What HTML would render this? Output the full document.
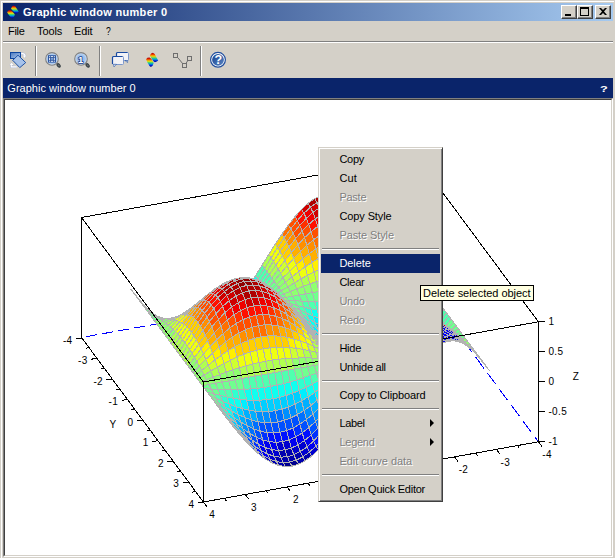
<!DOCTYPE html>
<html><head><meta charset="utf-8"><title>Graphic window number 0</title>
<style>
html,body{margin:0;padding:0;}
body{width:615px;height:558px;overflow:hidden;background:#d4d0c8;font-family:"Liberation Sans",sans-serif;font-size:11px;color:#000;position:relative;}
.abs{position:absolute;}
#title{left:3px;top:3px;width:610px;height:18px;background:linear-gradient(to right,#0a246a 0%,#a6caf0 100%);}
#title .t{position:absolute;left:20px;top:2px;color:#fff;font-weight:bold;font-size:11px;line-height:14px;white-space:nowrap;letter-spacing:0.3px;}
.wb{position:absolute;top:2px;width:16px;height:14px;background:#d4d0c8;box-sizing:border-box;border:1px solid;border-color:#fff #404040 #404040 #fff;box-shadow:inset -1px -1px 0 #808080;}
#menubar span{position:absolute;top:25px;line-height:13px;font-size:11px;}
#canvas{left:5px;top:100px;width:606px;height:455px;background:#fff;}
#bluebar{left:3px;top:78px;width:610px;height:20px;background:#0a246a;color:#fff;}
#ctx{left:318px;top:147px;width:125px;height:355px;background:#d4d0c8;box-sizing:border-box;border:1px solid;border-color:#d4d0c8 #404040 #404040 #d4d0c8;box-shadow:inset 1px 1px 0 #fff, inset -1px -1px 0 #808080;}
#ctx .i{position:absolute;left:2px;width:119px;height:19px;line-height:19px;white-space:nowrap;}
#ctx .i span{position:absolute;left:18.4px;top:0;letter-spacing:-0.25px;}
#ctx .d{color:#808080;text-shadow:1px 1px 0 #fff;}
#ctx .h{background:#0a246a;color:#fff;}
#ctx .s{position:absolute;left:3px;width:117px;height:1px;background:#808080;border-bottom:1px solid #fff;}
#ctx .a{position:absolute;left:111px;width:0;height:0;border-left:4px solid #000;border-top:4px solid transparent;border-bottom:4px solid transparent;}
#tip{left:420px;top:285px;width:114px;height:16px;box-sizing:border-box;border:1px solid #000;background:#ffffe1;font-size:11px;line-height:14px;white-space:nowrap;}
#tip span{position:absolute;left:2px;top:0;letter-spacing:-0.03px;}
svg text{font-family:"Liberation Sans",sans-serif;}
</style></head><body>
<!-- window frame -->
<div class="abs" style="left:1px;top:1px;width:613px;height:1px;background:#fff"></div>
<div class="abs" style="left:1px;top:1px;width:1px;height:557px;background:#fff"></div>
<div class="abs" id="title"><span class="t">Graphic window number 0</span>
<div class="wb" style="left:558px"></div><div class="wb" style="left:574px"></div><div class="wb" style="left:592px"></div>
<svg class="abs" style="left:558px;top:2px" width="52" height="14" viewBox="561 5 52 14" shape-rendering="crispEdges"><rect x="565" y="14" width="6" height="2" fill="#000"/><path d="M580 7h9v9h-9zM581 9v6h7v-6z" fill="#000" fill-rule="evenodd"/><path d="M599 8h2l2 2l2-2h2l-3 3.500l3 3.500h-2l-2-2l-2 2h-2l3-3.500z" fill="#000" shape-rendering="auto"/></svg>
</div>
<div class="abs" id="menubar"><span style="left:8px;letter-spacing:-0.300px">File</span><span style="left:37px;letter-spacing:-0.100px">Tools</span><span style="left:74px;letter-spacing:-0.150px">Edit</span><span style="left:106px;transform:scale(0.78,1);transform-origin:0 0">?</span></div>
<div class="abs" style="left:3px;top:41px;width:610px;height:1px;background:#808080"></div>
<div class="abs" style="left:3px;top:42px;width:610px;height:1px;background:#fff"></div>
<!-- toolbar icons -->
<svg class="abs" style="left:0;top:43px" width="615" height="35" viewBox="0 43 615 35">
<defs>
<linearGradient id="rb" x1="0" y1="0" x2="0" y2="1"><stop offset="0" stop-color="#a00000"/><stop offset="0.14" stop-color="#e01800"/><stop offset="0.30" stop-color="#f8a000"/><stop offset="0.43" stop-color="#c8e020"/><stop offset="0.56" stop-color="#30d080"/><stop offset="0.70" stop-color="#0098e0"/><stop offset="0.86" stop-color="#0018d0"/><stop offset="1" stop-color="#000080"/></linearGradient>
<linearGradient id="bl" x1="0" y1="0" x2="1" y2="1"><stop offset="0" stop-color="#4878c0"/><stop offset="1" stop-color="#b0c8ec"/></linearGradient>
<radialGradient id="lens" cx="0.5" cy="0.5" r="0.5"><stop offset="0" stop-color="#7ea8e0"/><stop offset="0.700" stop-color="#a8c8f0"/><stop offset="1" stop-color="#d8e6f6"/></radialGradient>
<linearGradient id="hp" x1="0" y1="0" x2="1" y2="1"><stop offset="0" stop-color="#17428f"/><stop offset="1" stop-color="#5884c2"/></linearGradient>
</defs>
<g fill="none">
<!-- separators -->
<path d="M35.5 46V76M99.5 46V76M200.500 46V76" stroke="#808080"/><path d="M36.5 46V76M100.5 46V76M201.5 46V76" stroke="#fff"/>
<!-- rotate icon -->
<path d="M21.200 53.600h1.400c1.600 0 2.200 0.800 2.200 2.200" stroke="#b4bed6" stroke-width="2.400"/><path d="M22.400 55.300h4.200l-2.100 3z" fill="#b4bed6"/>
<path d="M21.200 53.600h1.400c1.600 0 2.200 0.800 2.200 2.200" stroke="#fff" stroke-width="1.200"/><path d="M22.900 55.600h3.200l-1.600 2.300z" fill="#fff"/>
<path d="M16.800 66.900h-5.400v-1.600" stroke="#b4bed6" stroke-width="2.400"/><path d="M9.300 65.300l2.300-3 2.300 3z" fill="#b4bed6"/>
<path d="M16.800 66.900h-5.400v-1.600" stroke="#fff" stroke-width="1.200"/><path d="M9.800 65l1.800-2.300 1.800 2.300z" fill="#fff"/>
<rect x="10.5" y="52.5" width="10" height="6" fill="url(#bl)" stroke="#0f469e"/>
<path d="M18 55.2L25.7 62.6L19.8 67.6L12.7 60.3Z" fill="#a6c2ea" stroke="#0f469e" stroke-width="0.9"/>
<!-- zoom icon -->
<path d="M55.800 62.800l2 2" stroke="#50585c" stroke-width="1.400"/><ellipse cx="58.700" cy="65.400" rx="2.500" ry="1.800" transform="rotate(45 58.700 65.400)" fill="#3c4448"/><ellipse cx="58.700" cy="65.400" rx="1.100" ry="0.600" transform="rotate(45 58.700 65.400)" fill="#70787c"/>
<circle cx="52" cy="58.9" r="6.300" fill="url(#lens)" stroke="#808080" stroke-width="1.100"/>
<rect x="48" y="55.2" width="8" height="7.4" fill="#2f579f"/>
<path d="M49.2 56.600h5.600M49.200 61.300h5.600" stroke="#fff" stroke-width="0.9" stroke-dasharray="0.9,0.8,2.2,0.8"/>
<path d="M49.600 57.800v2.400M54.300 57.800v2.400" stroke="#fff" stroke-width="0.9"/><rect x="51.200" y="58" width="1.600" height="1.800" fill="#8db2e4"/>
<!-- zoom 1 icon -->
<path d="M84.800 62.800l2 2" stroke="#50585c" stroke-width="1.400"/><ellipse cx="87.700" cy="65.400" rx="2.500" ry="1.800" transform="rotate(45 87.700 65.400)" fill="#3c4448"/><ellipse cx="87.700" cy="65.400" rx="1.100" ry="0.600" transform="rotate(45 87.700 65.400)" fill="#70787c"/>
<circle cx="81" cy="58.9" r="6.300" fill="url(#lens)" stroke="#808080" stroke-width="1.100"/>
<text x="80.600" y="62.600" text-anchor="middle" font-size="9.500" font-weight="bold" fill="#fff" stroke="#1a3c86" stroke-width="1.500" paint-order="stroke" stroke-linejoin="round">1</text>
<!-- bubbles -->
<rect x="116.5" y="52.5" width="12" height="8" rx="1" fill="#f2f2f6" stroke="#7c98cc"/><path d="M116.5 60V53.5a1 1 0 0 1 1-1H127.500" stroke="#1a4aa0" stroke-width="1.2"/><path d="M125 60.5h2.600v2z" fill="#fff" stroke="#1a4aa0" stroke-width="0.6"/>
<rect x="112.5" y="56.500" width="11" height="8" rx="1" fill="#f2f2f6" stroke="#7c98cc"/><path d="M112.500 64V57.500a1 1 0 0 1 1-1H122.500" stroke="#1a4aa0" stroke-width="1.2"/><path d="M113.600 64.300h2.800l-2.400 2.600z" fill="#fff" stroke="#1a4aa0" stroke-width="0.6"/>
<!-- surface icon -->
<polygon points="149.9,55.5 151.1,53.5 152.9,52.7 154.7,54.0 156.4,57.2 158.2,60.4 156.8,61.5 154.9,62.3 153.4,61.2 151.4,58.3" fill="url(#rb)"/>
<polygon points="146.1,59.2 147.4,57.8 149.5,57.5 151.5,59.0 153.700,62.900 152.600,65.800 150.900,66.900 149.500,66 147.200,61.900" fill="url(#rb)"/>
<!-- nodes icon -->
<path d="M178 57.800L182.300 63.200M186 63.300L187.800 60.600" stroke="#6e6e6e" stroke-width="1"/>
<rect x="173.500" y="53.500" width="4" height="4" stroke="#6e6e6e"/><rect x="182.500" y="63.500" width="4" height="4" stroke="#6e6e6e"/><rect x="187.500" y="56.500" width="4" height="4" stroke="#6e6e6e"/>
<!-- help icon -->
<circle cx="218" cy="59.800" r="7.400" fill="#fff" stroke="#1f4e9e" stroke-width="1.200"/><circle cx="218" cy="59.800" r="5.900" fill="url(#hp)"/>
</g>
<text x="218.200" y="64.300" text-anchor="middle" font-size="12.500" font-weight="bold" fill="#fff">?</text>
</svg>
<!-- title icon -->
<svg class="abs" style="left:3px;top:3px" width="20" height="18" viewBox="3 3 20 18">
<polygon points="11.0,8.7 12.0,6.6 13.7,5.4 15.400,6.400 17.300,9.400 18.700,11.400 17.300,13 15.500,13.600 14.500,12.500 12.500,10.400" fill="url(#rb)"/>
<polygon points="7.1,12.2 8.3,10.500 10.0,9.9 11.700,10.800 14.900,14.400 14,16.700 12.200,18.400 10.900,17.500 8.500,14.500" fill="url(#rb)"/>
</svg>
<div class="abs" id="bluebar"><span class="abs" style="left:4.300px;top:3px;line-height:14px;font-size:11px;white-space:nowrap;letter-spacing:0.030px">Graphic window number 0</span><span class="abs" style="left:596.500px;top:3px;line-height:14px;font-weight:bold;transform:scale(1.16,0.86);transform-origin:0 11px">?</span></div>
<div class="abs" style="left:3px;top:98px;width:610px;height:459px;box-sizing:border-box;border:1px solid;border-color:#808080 #fff #fff #808080"></div>
<div class="abs" style="left:4px;top:99px;width:608px;height:457px;box-sizing:border-box;border:1px solid;border-color:#404040 #d4d0c8 #d4d0c8 #404040"></div>
<div class="abs" id="canvas"></div>
<svg class="abs" style="left:0;top:0" width="615" height="558" viewBox="0 0 615 558">
<g stroke="#0000ff" stroke-width="1" shape-rendering="crispEdges"><line x1="416.5" y1="277.3" x2="81.5" y2="337.5" stroke-dasharray="11.18,5.08" stroke-dashoffset="1"/><line x1="416.5" y1="277.3" x2="538.4" y2="441.8" stroke-dasharray="13.69,6.22"/><line x1="416.5" y1="277.3" x2="416.5" y2="157.3" stroke-dasharray="11.00,5.00"/></g>
<g stroke="#000" stroke-width="1" shape-rendering="crispEdges"><line x1="81.5" y1="217.5" x2="416.5" y2="157.3" /><line x1="416.5" y1="157.3" x2="538.4" y2="321.8" /><line x1="81.5" y1="217.5" x2="81.5" y2="337.5" /></g>
<g stroke="#b2b2b2" stroke-width="1" shape-rendering="crispEdges"><polygon fill="#af0000" points="321.3,195.2 314.7,198.5 317.1,202.5 323.7,199.1"/><polygon fill="#af0000" points="314.7,198.5 308.1,203.3 310.5,207.2 317.1,202.5"/><polygon fill="#cf0000" points="308.1,203.3 301.5,209.4 303.9,213.2 310.5,207.2"/><polygon fill="#ff1000" points="301.5,209.4 295.0,216.7 297.4,220.5 303.9,213.2"/><polygon fill="#ff5000" points="295.0,216.7 288.4,225.1 290.8,228.7 297.4,220.5"/><polygon fill="#00cfff" points="248.9,286.0 242.3,295.8 244.7,298.7 251.3,289.0"/><polygon fill="#10ffef" points="255.5,275.6 248.9,286.0 251.3,289.0 257.9,278.7"/><polygon fill="#50ffaf" points="262.1,265.1 255.5,275.6 257.9,278.7 264.5,268.3"/><polygon fill="#0070ff" points="242.3,295.8 235.8,305.0 238.2,307.8 244.7,298.7"/><polygon fill="#ff7000" points="288.4,225.1 281.8,234.3 284.2,237.8 290.8,228.7"/><polygon fill="#afff50" points="268.7,254.5 262.1,265.1 264.5,268.3 271.1,257.8"/><polygon fill="#efff10" points="275.2,244.1 268.7,254.5 271.1,257.8 277.6,247.6"/><polygon fill="#ffcf00" points="281.8,234.3 275.2,244.1 277.6,247.6 284.2,237.8"/><polygon fill="#0050ff" points="235.8,305.0 229.2,313.4 231.6,316.1 238.2,307.8"/><polygon fill="#0010ff" points="229.2,313.4 222.6,320.7 225.0,323.3 231.6,316.1"/><polygon fill="#af0000" points="323.7,199.1 317.1,202.5 319.5,207.8 326.1,204.5"/><polygon fill="#0000cf" points="222.6,320.7 216.0,326.8 218.4,329.4 225.0,323.3"/><polygon fill="#0000af" points="216.0,326.8 209.5,331.6 211.9,334.1 218.4,329.4"/><polygon fill="#cf0000" points="317.1,202.5 310.5,207.2 312.9,212.4 319.5,207.8"/><polygon fill="#ef0000" points="310.5,207.2 303.9,213.2 306.3,218.3 312.9,212.4"/><polygon fill="#0000af" points="209.5,331.6 202.9,335.0 205.3,337.5 211.9,334.1"/><polygon fill="#ff1000" points="303.9,213.2 297.4,220.5 299.8,225.3 306.3,218.3"/><polygon fill="#ff5000" points="297.4,220.5 290.8,228.7 293.2,233.2 299.8,225.3"/><polygon fill="#ff8f00" points="290.8,228.7 284.2,237.8 286.6,242.1 293.2,233.2"/><polygon fill="#10ffef" points="257.9,278.7 251.3,289.0 253.7,291.5 260.3,281.6"/><polygon fill="#50ffaf" points="264.5,268.3 257.9,278.7 260.3,281.6 266.9,271.5"/><polygon fill="#00cfff" points="251.3,289.0 244.7,298.7 247.1,301.0 253.7,291.5"/><polygon fill="#ffcf00" points="284.2,237.8 277.6,247.6 280.0,251.5 286.6,242.1"/><polygon fill="#afff50" points="271.1,257.8 264.5,268.3 266.9,271.5 273.4,261.4"/><polygon fill="#efff10" points="277.6,247.6 271.1,257.8 273.4,261.4 280.0,251.5"/><polygon fill="#00008f" points="202.9,335.0 196.3,336.9 198.7,339.4 205.3,337.5"/><polygon fill="#008fff" points="244.7,298.7 238.2,307.8 240.6,309.8 247.1,301.0"/><polygon fill="#0050ff" points="238.2,307.8 231.6,316.1 234.0,317.8 240.6,309.8"/><polygon fill="#cf0000" points="326.1,204.5 319.5,207.8 321.9,214.4 328.5,211.3"/><polygon fill="#0010ff" points="231.6,316.1 225.0,323.3 227.4,324.8 234.0,317.8"/><polygon fill="#0000ef" points="225.0,323.3 218.4,329.4 220.8,330.6 227.4,324.8"/><polygon fill="#cf0000" points="319.5,207.8 312.9,212.4 315.3,218.8 321.9,214.4"/><polygon fill="#00008f" points="196.3,336.9 189.7,337.3 192.1,339.8 198.7,339.4"/><polygon fill="#0000cf" points="218.4,329.4 211.9,334.1 214.2,335.2 220.8,330.6"/><polygon fill="#ef0000" points="312.9,212.4 306.3,218.3 308.7,224.4 315.3,218.8"/><polygon fill="#ff3000" points="306.3,218.3 299.8,225.3 302.1,231.0 308.7,224.4"/><polygon fill="#0000af" points="211.9,334.1 205.3,337.5 207.7,338.5 214.2,335.2"/><polygon fill="#0000af" points="189.7,337.3 183.1,336.3 185.5,338.8 192.1,339.8"/><polygon fill="#ff5000" points="299.8,225.3 293.2,233.2 295.6,238.6 302.1,231.0"/><polygon fill="#ff8f00" points="293.2,233.2 286.6,242.1 289.0,246.9 295.6,238.6"/><polygon fill="#ffcf00" points="286.6,242.1 280.0,251.5 282.4,255.9 289.0,246.9"/><polygon fill="#efff10" points="280.0,251.5 273.4,261.4 275.8,265.2 282.4,255.9"/><polygon fill="#afff50" points="273.4,261.4 266.9,271.5 269.3,274.7 275.8,265.2"/><polygon fill="#50ffaf" points="266.9,271.5 260.3,281.6 262.7,284.3 269.3,274.7"/><polygon fill="#10ffef" points="260.3,281.6 253.7,291.5 256.1,293.6 262.7,284.3"/><polygon fill="#00cfff" points="253.7,291.5 247.1,301.0 249.5,302.6 256.1,293.6"/><polygon fill="#0000af" points="205.3,337.5 198.7,339.4 201.1,340.4 207.7,338.5"/><polygon fill="#008fff" points="247.1,301.0 240.6,309.8 242.9,310.9 249.5,302.6"/><polygon fill="#0050ff" points="240.6,309.8 234.0,317.8 236.4,318.5 242.9,310.9"/><polygon fill="#ef0000" points="321.9,214.4 315.3,218.8 317.7,226.4 324.3,222.3"/><polygon fill="#0030ff" points="234.0,317.8 227.4,324.8 229.8,325.1 236.4,318.5"/><polygon fill="#0000af" points="183.1,336.3 176.6,333.9 179.0,336.4 185.5,338.8"/><polygon fill="#ff1000" points="315.3,218.8 308.7,224.4 311.1,231.6 317.7,226.4"/><polygon fill="#0000ef" points="227.4,324.8 220.8,330.6 223.2,330.6 229.8,325.1"/><polygon fill="#0000af" points="198.7,339.4 192.1,339.8 194.5,340.9 201.1,340.4"/><polygon fill="#ff5000" points="308.7,224.4 302.1,231.0 304.5,237.7 311.1,231.6"/><polygon fill="#0000cf" points="220.8,330.6 214.2,335.2 216.6,335.0 223.2,330.6"/><polygon fill="#ff7000" points="302.1,231.0 295.6,238.6 298.0,244.7 304.5,237.7"/><polygon fill="#ffaf00" points="295.6,238.6 289.0,246.9 291.4,252.4 298.0,244.7"/><polygon fill="#0000cf" points="176.6,333.9 170.0,330.1 172.4,332.8 179.0,336.4"/><polygon fill="#0000af" points="192.1,339.8 185.5,338.8 187.9,340.0 194.5,340.9"/><polygon fill="#0000cf" points="214.2,335.2 207.7,338.5 210.1,338.2 216.6,335.0"/><polygon fill="#ffcf00" points="289.0,246.9 282.4,255.9 284.8,260.6 291.4,252.4"/><polygon fill="#efff10" points="282.4,255.9 275.8,265.2 278.2,269.2 284.8,260.6"/><polygon fill="#afff50" points="275.8,265.2 269.3,274.7 271.7,278.0 278.2,269.2"/><polygon fill="#ff3000" points="324.3,222.3 317.7,226.4 320.1,235.1 326.7,231.4"/><polygon fill="#50ffaf" points="269.3,274.7 262.7,284.3 265.1,286.7 271.7,278.0"/><polygon fill="#10ffef" points="262.7,284.3 256.1,293.6 258.5,295.3 265.1,286.7"/><polygon fill="#00cfff" points="256.1,293.6 249.5,302.6 251.9,303.6 258.5,295.3"/><polygon fill="#00afff" points="249.5,302.6 242.9,310.9 245.3,311.2 251.9,303.6"/><polygon fill="#0000af" points="207.7,338.5 201.1,340.4 203.5,340.0 210.1,338.2"/><polygon fill="#ff5000" points="317.7,226.4 311.1,231.6 313.5,239.8 320.1,235.1"/><polygon fill="#0070ff" points="242.9,310.9 236.4,318.5 238.8,318.2 245.3,311.2"/><polygon fill="#0000cf" points="185.5,338.8 179.0,336.4 181.4,337.7 187.9,340.0"/><polygon fill="#0050ff" points="236.4,318.5 229.8,325.1 232.2,324.3 238.8,318.2"/><polygon fill="#0010ff" points="170.0,330.1 163.4,325.2 165.8,327.9 172.4,332.8"/><polygon fill="#ff7000" points="311.1,231.6 304.5,237.7 306.9,245.3 313.5,239.8"/><polygon fill="#0000ef" points="201.1,340.4 194.5,340.9 196.9,340.5 203.5,340.0"/><polygon fill="#ff8f00" points="304.5,237.7 298.0,244.7 300.4,251.5 306.9,245.3"/><polygon fill="#0010ff" points="229.8,325.1 223.2,330.6 225.6,329.5 232.2,324.3"/><polygon fill="#ffaf00" points="298.0,244.7 291.4,252.4 293.8,258.4 300.4,251.5"/><polygon fill="#0000ef" points="223.2,330.6 216.6,335.0 219.0,333.6 225.6,329.5"/><polygon fill="#ffef00" points="291.4,252.4 284.8,260.6 287.2,265.7 293.8,258.4"/><polygon fill="#0000ef" points="179.0,336.4 172.4,332.8 174.8,334.2 181.4,337.7"/><polygon fill="#cfff30" points="284.8,260.6 278.2,269.2 280.6,273.4 287.2,265.7"/><polygon fill="#8fff70" points="278.2,269.2 271.7,278.0 274.0,281.2 280.6,273.4"/><polygon fill="#0000ef" points="194.5,340.9 187.9,340.0 190.3,339.8 196.9,340.5"/><polygon fill="#ff7000" points="320.1,235.1 313.5,239.8 315.9,248.8 322.5,244.7"/><polygon fill="#70ff8f" points="271.7,278.0 265.1,286.7 267.5,289.0 274.0,281.2"/><polygon fill="#0050ff" points="163.4,325.2 156.8,319.2 159.2,322.0 165.8,327.9"/><polygon fill="#0000ef" points="216.6,335.0 210.1,338.2 212.5,336.6 219.0,333.6"/><polygon fill="#30ffcf" points="265.1,286.7 258.5,295.3 260.9,296.7 267.5,289.0"/><polygon fill="#00efff" points="258.5,295.3 251.9,303.6 254.3,304.0 260.9,296.7"/><polygon fill="#ff8f00" points="313.5,239.8 306.9,245.3 309.3,253.6 315.9,248.8"/><polygon fill="#00afff" points="251.9,303.6 245.3,311.2 247.7,310.9 254.3,304.0"/><polygon fill="#0000ef" points="210.1,338.2 203.5,340.0 205.9,338.3 212.5,336.6"/><polygon fill="#ffaf00" points="306.9,245.3 300.4,251.5 302.8,259.0 309.3,253.6"/><polygon fill="#008fff" points="245.3,311.2 238.8,318.2 241.2,317.1 247.7,310.9"/><polygon fill="#0000ef" points="187.9,340.0 181.4,337.7 183.8,337.7 190.3,339.8"/><polygon fill="#0000ef" points="172.4,332.8 165.8,327.9 168.2,329.6 174.8,334.2"/><polygon fill="#ffcf00" points="300.4,251.5 293.8,258.4 296.2,264.9 302.8,259.0"/><polygon fill="#0070ff" points="238.8,318.2 232.2,324.3 234.6,322.6 241.2,317.1"/><polygon fill="#efff10" points="293.8,258.4 287.2,265.7 289.6,271.2 296.2,264.9"/><polygon fill="#0070ff" points="156.8,319.2 150.3,312.4 152.7,315.3 159.2,322.0"/><polygon fill="#ffaf00" points="322.5,244.7 315.9,248.8 318.3,258.5 324.9,255.1"/><polygon fill="#0000ef" points="203.5,340.0 196.9,340.5 199.3,338.9 205.9,338.3"/><polygon fill="#0000ef" points="232.2,324.3 225.6,329.5 228.0,327.3 234.6,322.6"/><polygon fill="#cfff30" points="287.2,265.7 280.6,273.4 283.0,277.7 289.6,271.2"/><polygon fill="#8fff70" points="280.6,273.4 274.0,281.2 276.4,284.4 283.0,277.7"/><polygon fill="#ffaf00" points="315.9,248.8 309.3,253.6 311.7,262.5 318.3,258.5"/><polygon fill="#0000ef" points="181.4,337.7 174.8,334.2 177.2,334.5 183.8,337.7"/><polygon fill="#0000ef" points="225.6,329.5 219.0,333.6 221.4,331.0 228.0,327.3"/><polygon fill="#70ff8f" points="274.0,281.2 267.5,289.0 269.9,291.1 276.4,284.4"/><polygon fill="#0000ef" points="165.8,327.9 159.2,322.0 161.6,324.0 168.2,329.6"/><polygon fill="#0000ef" points="196.9,340.5 190.3,339.8 192.7,338.3 199.3,338.9"/><polygon fill="#30ffcf" points="267.5,289.0 260.9,296.7 263.3,297.7 269.9,291.1"/><polygon fill="#ffcf00" points="309.3,253.6 302.8,259.0 305.1,266.9 311.7,262.5"/><polygon fill="#0000ef" points="219.0,333.6 212.5,336.6 214.8,333.7 221.4,331.0"/><polygon fill="#10ffef" points="260.9,296.7 254.3,304.0 256.7,304.0 263.3,297.7"/><polygon fill="#ffef00" points="302.8,259.0 296.2,264.9 298.6,271.7 305.1,266.9"/><polygon fill="#00cfff" points="150.3,312.4 143.7,304.9 146.1,307.9 152.7,315.3"/><polygon fill="#ffcf00" points="324.9,255.1 318.3,258.5 320.7,268.8 327.3,266.1"/><polygon fill="#00cfff" points="254.3,304.0 247.7,310.9 250.1,309.9 256.7,304.0"/><polygon fill="#0000ef" points="174.8,334.2 168.2,329.6 170.6,330.3 177.2,334.5"/><polygon fill="#efff10" points="296.2,264.9 289.6,271.2 292.0,276.9 298.6,271.7"/><polygon fill="#0000ef" points="212.5,336.6 205.9,338.3 208.3,335.4 214.8,333.7"/><polygon fill="#00afff" points="247.7,310.9 241.2,317.1 243.6,315.3 250.1,309.9"/><polygon fill="#0000ef" points="190.3,339.8 183.8,337.7 186.1,336.6 192.7,338.3"/><polygon fill="#ffef00" points="318.3,258.5 311.7,262.5 314.1,271.9 320.7,268.8"/><polygon fill="#afff50" points="289.6,271.2 283.0,277.7 285.4,282.2 292.0,276.9"/><polygon fill="#0000ef" points="159.2,322.0 152.7,315.3 155.0,317.5 161.6,324.0"/><polygon fill="#0000ef" points="241.2,317.1 234.6,322.6 237.0,320.1 243.6,315.3"/><polygon fill="#8fff70" points="283.0,277.7 276.4,284.4 278.8,287.7 285.4,282.2"/><polygon fill="#0000ef" points="205.9,338.3 199.3,338.9 201.7,336.1 208.3,335.4"/><polygon fill="#efff10" points="311.7,262.5 305.1,266.9 307.5,275.3 314.1,271.9"/><polygon fill="#0000ef" points="234.6,322.6 228.0,327.3 230.4,324.1 237.0,320.1"/><polygon fill="#70ff8f" points="276.4,284.4 269.9,291.1 272.3,293.1 278.8,287.7"/><polygon fill="#0000ef" points="183.8,337.7 177.2,334.5 179.6,333.8 186.1,336.6"/><polygon fill="#10ffef" points="143.7,304.9 137.1,296.9 139.5,300.0 146.1,307.9"/><polygon fill="#0000ef" points="168.2,329.6 161.6,324.0 164.0,325.1 170.6,330.3"/><polygon fill="#efff10" points="305.1,266.9 298.6,271.7 301.0,278.9 307.5,275.3"/><polygon fill="#50ffaf" points="269.9,291.1 263.3,297.7 265.7,298.4 272.3,293.1"/><polygon fill="#0000ef" points="228.0,327.3 221.4,331.0 223.8,327.4 230.4,324.1"/><polygon fill="#0000ef" points="199.3,338.9 192.7,338.3 195.1,335.7 201.7,336.1"/><polygon fill="#10ffef" points="263.3,297.7 256.7,304.0 259.1,303.6 265.7,298.4"/><polygon fill="#cfff30" points="320.7,268.8 314.1,271.9 316.5,281.6 323.1,279.4"/><polygon fill="#cfff30" points="298.6,271.7 292.0,276.9 294.4,282.8 301.0,278.9"/><polygon fill="#0000ef" points="152.7,315.3 146.1,307.9 148.5,310.4 155.0,317.5"/><polygon fill="#0000ef" points="221.4,331.0 214.8,333.7 217.2,329.9 223.8,327.4"/><polygon fill="#00efff" points="256.7,304.0 250.1,309.9 252.5,308.4 259.1,303.6"/><polygon fill="#afff50" points="292.0,276.9 285.4,282.2 287.8,286.8 294.4,282.8"/><polygon fill="#0000ef" points="177.2,334.5 170.6,330.3 173.0,330.0 179.6,333.8"/><polygon fill="#cfff30" points="314.1,271.9 307.5,275.3 309.9,283.9 316.5,281.6"/><polygon fill="#0000ef" points="250.1,309.9 243.6,315.3 245.9,312.8 252.5,308.4"/><polygon fill="#0000ef" points="161.6,324.0 155.0,317.5 157.4,319.1 164.0,325.1"/><polygon fill="#0000ef" points="192.7,338.3 186.1,336.6 188.5,334.4 195.1,335.7"/><polygon fill="#0000ef" points="214.8,333.7 208.3,335.4 210.7,331.5 217.2,329.9"/><polygon fill="#8fff70" points="285.4,282.2 278.8,287.7 281.2,290.9 287.8,286.8"/><polygon fill="#50ffaf" points="137.1,296.9 130.5,288.7 132.9,291.9 139.5,300.0"/><polygon fill="#0000ef" points="243.6,315.3 237.0,320.1 239.4,316.8 245.9,312.8"/><polygon fill="#afff50" points="307.5,275.3 301.0,278.9 303.4,286.3 309.9,283.9"/><polygon fill="#70ff8f" points="278.8,287.7 272.3,293.1 274.7,295.0 281.2,290.9"/><polygon fill="#8fff70" points="323.1,279.4 316.5,281.6 318.9,291.4 325.5,290.3"/><polygon fill="#0000ef" points="146.1,307.9 139.5,300.0 141.9,302.9 148.5,310.4"/><polygon fill="#0000ef" points="208.3,335.4 201.7,336.1 204.1,332.3 210.7,331.5"/><polygon fill="#0000ef" points="237.0,320.1 230.4,324.1 232.8,320.2 239.4,316.8"/><polygon fill="#0000ef" points="170.6,330.3 164.0,325.1 166.4,325.4 173.0,330.0"/><polygon fill="#afff50" points="301.0,278.9 294.4,282.8 296.8,288.9 303.4,286.3"/><polygon fill="#0000ef" points="186.1,336.6 179.6,333.8 182.0,332.1 188.5,334.4"/><polygon fill="#50ffaf" points="272.3,293.1 265.7,298.4 268.1,299.0 274.7,295.0"/><polygon fill="#8fff70" points="316.5,281.6 309.9,283.9 312.3,292.6 318.9,291.4"/><polygon fill="#0000ef" points="155.0,317.5 148.5,310.4 150.9,312.5 157.4,319.1"/><polygon fill="#0000ef" points="230.4,324.1 223.8,327.4 226.2,323.0 232.8,320.2"/><polygon fill="#30ffcf" points="265.7,298.4 259.1,303.6 261.5,302.9 268.1,299.0"/><polygon fill="#8fff70" points="294.4,282.8 287.8,286.8 290.2,291.5 296.8,288.9"/><polygon fill="#0000ef" points="201.7,336.1 195.1,335.7 197.5,332.2 204.1,332.3"/><polygon fill="#10ffef" points="259.1,303.6 252.5,308.4 254.9,306.5 261.5,302.9"/><polygon fill="#8fff70" points="309.9,283.9 303.4,286.3 305.7,293.8 312.3,292.6"/><polygon fill="#0000ef" points="223.8,327.4 217.2,329.9 219.6,325.2 226.2,323.0"/><polygon fill="#70ff8f" points="325.5,290.3 318.9,291.4 321.3,301.3 327.9,301.1"/><polygon fill="#0000ef" points="179.6,333.8 173.0,330.0 175.4,328.9 182.0,332.1"/><polygon fill="#8fff70" points="287.8,286.8 281.2,290.9 283.6,294.1 290.2,291.5"/><polygon fill="#50ffaf" points="139.5,300.0 132.9,291.9 135.3,295.2 141.9,302.9"/><polygon fill="#0000ef" points="164.0,325.1 157.4,319.1 159.8,320.1 166.4,325.4"/><polygon fill="#0000ef" points="252.5,308.4 245.9,312.8 248.3,309.9 254.9,306.5"/><polygon fill="#0000ef" points="195.1,335.7 188.5,334.4 190.9,331.2 197.5,332.2"/><polygon fill="#70ff8f" points="281.2,290.9 274.7,295.0 277.0,296.8 283.6,294.1"/><polygon fill="#8fff70" points="303.4,286.3 296.8,288.9 299.2,295.0 305.7,293.8"/><polygon fill="#0000ef" points="217.2,329.9 210.7,331.5 213.1,326.7 219.6,325.2"/><polygon fill="#0000ef" points="148.5,310.4 141.9,302.9 144.3,305.6 150.9,312.5"/><polygon fill="#70ff8f" points="318.9,291.4 312.3,292.6 314.7,301.4 321.3,301.3"/><polygon fill="#0000ef" points="245.9,312.8 239.4,316.8 241.8,313.0 248.3,309.9"/><polygon fill="#70ff8f" points="274.7,295.0 268.1,299.0 270.5,299.4 277.0,296.8"/><polygon fill="#0000ef" points="173.0,330.0 166.4,325.4 168.8,325.1 175.4,328.9"/><polygon fill="#8fff70" points="296.8,288.9 290.2,291.5 292.6,296.2 299.2,295.0"/><polygon fill="#0000ef" points="210.7,331.5 204.1,332.3 206.5,327.6 213.1,326.7"/><polygon fill="#0000ef" points="188.5,334.4 182.0,332.1 184.4,329.5 190.9,331.2"/><polygon fill="#0000ef" points="239.4,316.8 232.8,320.2 235.2,315.7 241.8,313.0"/><polygon fill="#0000ef" points="157.4,319.1 150.9,312.5 153.3,314.2 159.8,320.1"/><polygon fill="#70ff8f" points="312.3,292.6 305.7,293.8 308.1,301.3 314.7,301.4"/><polygon fill="#50ffaf" points="268.1,299.0 261.5,302.9 263.9,301.9 270.5,299.4"/><polygon fill="#8fff70" points="290.2,291.5 283.6,294.1 286.0,297.4 292.6,296.2"/><polygon fill="#0000ef" points="232.8,320.2 226.2,323.0 228.6,318.0 235.2,315.7"/><polygon fill="#50ffaf" points="141.9,302.9 135.3,295.2 137.7,298.4 144.3,305.6"/><polygon fill="#0000ef" points="204.1,332.3 197.5,332.2 199.9,327.8 206.5,327.6"/><polygon fill="#0000ef" points="261.5,302.9 254.9,306.5 257.3,304.4 263.9,301.9"/><polygon fill="#30ffcf" points="321.3,301.3 314.7,301.4 317.1,310.0 323.7,311.0"/><polygon fill="#70ff8f" points="305.7,293.8 299.2,295.0 301.6,301.1 308.1,301.3"/><polygon fill="#0000ef" points="166.4,325.4 159.8,320.1 162.2,320.6 168.8,325.1"/><polygon fill="#0000ef" points="182.0,332.1 175.4,328.9 177.8,327.1 184.4,329.5"/><polygon fill="#70ff8f" points="283.6,294.1 277.0,296.8 279.4,298.5 286.0,297.4"/><polygon fill="#0000ef" points="226.2,323.0 219.6,325.2 222.0,319.8 228.6,318.0"/><polygon fill="#0000ef" points="150.9,312.5 144.3,305.6 146.7,308.0 153.3,314.2"/><polygon fill="#0000ef" points="254.9,306.5 248.3,309.9 250.7,306.7 257.3,304.4"/><polygon fill="#0000ef" points="197.5,332.2 190.9,331.2 193.3,327.3 199.9,327.8"/><polygon fill="#70ff8f" points="299.2,295.0 292.6,296.2 295.0,300.9 301.6,301.1"/><polygon fill="#50ffaf" points="314.7,301.4 308.1,301.3 310.5,308.7 317.1,310.0"/><polygon fill="#70ff8f" points="277.0,296.8 270.5,299.4 272.9,299.7 279.4,298.5"/><polygon fill="#0000ef" points="219.6,325.2 213.1,326.7 215.5,321.3 222.0,319.8"/><polygon fill="#0000ef" points="248.3,309.9 241.8,313.0 244.2,308.8 250.7,306.7"/><polygon fill="#0000ef" points="175.4,328.9 168.8,325.1 171.2,324.1 177.8,327.1"/><polygon fill="#0000ef" points="159.8,320.1 153.3,314.2 155.6,315.6 162.2,320.6"/><polygon fill="#10ffef" points="323.7,311.0 317.1,310.0 319.5,318.3 326.1,320.4"/><polygon fill="#70ff8f" points="292.6,296.2 286.0,297.4 288.4,300.6 295.0,300.9"/><polygon fill="#0000ef" points="190.9,331.2 184.4,329.5 186.7,326.2 193.3,327.3"/><polygon fill="#70ff8f" points="270.5,299.4 263.9,301.9 266.3,300.9 272.9,299.7"/><polygon fill="#50ffaf" points="308.1,301.3 301.6,301.1 304.0,307.2 310.5,308.7"/><polygon fill="#0000ef" points="241.8,313.0 235.2,315.7 237.6,310.8 244.2,308.8"/><polygon fill="#0000ef" points="213.1,326.7 206.5,327.6 208.9,322.2 215.5,321.3"/><polygon fill="#50ffaf" points="144.3,305.6 137.7,298.4 140.1,301.6 146.7,308.0"/><polygon fill="#0000ef" points="168.8,325.1 162.2,320.6 164.6,320.5 171.2,324.1"/><polygon fill="#0000ef" points="263.9,301.9 257.3,304.4 259.7,302.1 266.3,300.9"/><polygon fill="#8fff70" points="286.0,297.4 279.4,298.5 281.8,300.3 288.4,300.6"/><polygon fill="#0000ef" points="235.2,315.7 228.6,318.0 231.0,312.5 237.6,310.8"/><polygon fill="#10ffef" points="317.1,310.0 310.5,308.7 312.9,315.9 319.5,318.3"/><polygon fill="#0000ef" points="206.5,327.6 199.9,327.8 202.3,322.7 208.9,322.2"/><polygon fill="#0000ef" points="153.3,314.2 146.7,308.0 149.1,310.3 155.6,315.6"/><polygon fill="#0000ef" points="184.4,329.5 177.8,327.1 180.2,324.7 186.7,326.2"/><polygon fill="#70ff8f" points="301.6,301.1 295.0,300.9 297.4,305.5 304.0,307.2"/><polygon fill="#0000ef" points="257.3,304.4 250.7,306.7 253.1,303.3 259.7,302.1"/><polygon fill="#00cfff" points="326.1,320.4 319.5,318.3 321.9,326.3 328.5,329.3"/><polygon fill="#0000ef" points="228.6,318.0 222.0,319.8 224.4,314.0 231.0,312.5"/><polygon fill="#8fff70" points="279.4,298.5 272.9,299.7 275.3,300.0 281.8,300.3"/><polygon fill="#0000ef" points="199.9,327.8 193.3,327.3 195.7,322.8 202.3,322.7"/><polygon fill="#30ffcf" points="310.5,308.7 304.0,307.2 306.4,313.1 312.9,315.9"/><polygon fill="#0000ef" points="162.2,320.6 155.6,315.6 158.0,316.6 164.6,320.5"/><polygon fill="#70ff8f" points="295.0,300.9 288.4,300.6 290.8,303.8 297.4,305.5"/><polygon fill="#0000ef" points="177.8,327.1 171.2,324.1 173.6,322.6 180.2,324.7"/><polygon fill="#0000ef" points="250.7,306.7 244.2,308.8 246.5,304.4 253.1,303.3"/><polygon fill="#0000ef" points="222.0,319.8 215.5,321.3 217.8,315.3 224.4,314.0"/><polygon fill="#70ff8f" points="146.7,308.0 140.1,301.6 142.5,304.8 149.1,310.3"/><polygon fill="#0000ef" points="272.9,299.7 266.3,300.9 268.7,299.9 275.3,300.0"/><polygon fill="#00efff" points="319.5,318.3 312.9,315.9 315.3,322.7 321.9,326.3"/><polygon fill="#0000ef" points="193.3,327.3 186.7,326.2 189.1,322.4 195.7,322.8"/><polygon fill="#0000ef" points="244.2,308.8 237.6,310.8 240.0,305.6 246.5,304.4"/><polygon fill="#8fff70" points="288.4,300.6 281.8,300.3 284.2,302.1 290.8,303.8"/><polygon fill="#50ffaf" points="304.0,307.2 297.4,305.5 299.8,310.1 306.4,313.1"/><polygon fill="#0000ef" points="215.5,321.3 208.9,322.2 211.3,316.4 217.8,315.3"/><polygon fill="#0000ef" points="171.2,324.1 164.6,320.5 167.0,320.1 173.6,322.6"/><polygon fill="#0000ef" points="155.6,315.6 149.1,310.3 151.5,312.4 158.0,316.6"/><polygon fill="#0000ef" points="266.3,300.9 259.7,302.1 262.1,299.8 268.7,299.9"/><polygon fill="#0000ef" points="237.6,310.8 231.0,312.5 233.4,306.8 240.0,305.6"/><polygon fill="#0000ef" points="186.7,326.2 180.2,324.7 182.6,321.7 189.1,322.4"/><polygon fill="#10ffef" points="312.9,315.9 306.4,313.1 308.7,318.8 315.3,322.7"/><polygon fill="#0000ef" points="208.9,322.2 202.3,322.7 204.7,317.2 211.3,316.4"/><polygon fill="#8fff70" points="281.8,300.3 275.3,300.0 277.6,300.4 284.2,302.1"/><polygon fill="#70ff8f" points="297.4,305.5 290.8,303.8 293.2,307.0 299.8,310.1"/><polygon fill="#0000ef" points="259.7,302.1 253.1,303.3 255.5,299.9 262.1,299.8"/><polygon fill="#0000ef" points="164.6,320.5 158.0,316.6 160.4,317.4 167.0,320.1"/><polygon fill="#00cfff" points="321.9,326.3 315.3,322.7 317.7,329.2 324.3,333.7"/><polygon fill="#0000ef" points="231.0,312.5 224.4,314.0 226.8,308.0 233.4,306.8"/><polygon fill="#70ff8f" points="149.1,310.3 142.5,304.8 144.9,308.1 151.5,312.4"/><polygon fill="#0000ef" points="202.3,322.7 195.7,322.8 198.1,317.8 204.7,317.2"/><polygon fill="#0000ef" points="180.2,324.7 173.6,322.6 176.0,320.7 182.6,321.7"/><polygon fill="#0000ef" points="275.3,300.0 268.7,299.9 271.1,298.9 277.6,300.4"/><polygon fill="#0000ef" points="253.1,303.3 246.5,304.4 248.9,300.1 255.5,299.9"/><polygon fill="#50ffaf" points="306.4,313.1 299.8,310.1 302.2,314.6 308.7,318.8"/><polygon fill="#8fff70" points="290.8,303.8 284.2,302.1 286.6,304.0 293.2,307.0"/><polygon fill="#0000ef" points="224.4,314.0 217.8,315.3 220.2,309.2 226.8,308.0"/><polygon fill="#0000ef" points="195.7,322.8 189.1,322.4 191.5,318.3 198.1,317.8"/><polygon fill="#50ffaf" points="158.0,316.6 151.5,312.4 153.9,314.4 160.4,317.4"/><polygon fill="#10ffef" points="315.3,322.7 308.7,318.8 311.1,324.2 317.7,329.2"/><polygon fill="#0000ef" points="173.6,322.6 167.0,320.1 169.4,319.4 176.0,320.7"/><polygon fill="#0000ef" points="246.5,304.4 240.0,305.6 242.4,300.5 248.9,300.1"/><polygon fill="#0000ef" points="268.7,299.9 262.1,299.8 264.5,297.6 271.1,298.9"/><polygon fill="#0000ef" points="217.8,315.3 211.3,316.4 213.7,310.4 220.2,309.2"/><polygon fill="#50ffaf" points="441.5,306.0 434.9,316.6 437.3,319.7 443.9,309.2"/><polygon fill="#70ff8f" points="299.8,310.1 293.2,307.0 295.6,310.3 302.2,314.6"/><polygon fill="#00afff" points="324.3,333.7 317.7,329.2 320.1,335.2 326.7,340.5"/><polygon fill="#afff50" points="284.2,302.1 277.6,300.4 280.0,301.0 286.6,304.0"/><polygon fill="#0000ef" points="189.1,322.4 182.6,321.7 185.0,318.5 191.5,318.3"/><polygon fill="#0000ef" points="240.0,305.6 233.4,306.8 235.8,301.1 242.4,300.5"/><polygon fill="#70ff8f" points="151.5,312.4 144.9,308.1 147.3,311.3 153.9,314.4"/><polygon fill="#0000ef" points="211.3,316.4 204.7,317.2 207.1,311.5 213.7,310.4"/><polygon fill="#0000ef" points="167.0,320.1 160.4,317.4 162.8,317.9 169.4,319.4"/><polygon fill="#0000ef" points="262.1,299.8 255.5,299.9 257.9,296.6 264.5,297.6"/><polygon fill="#30ffcf" points="308.7,318.8 302.2,314.6 304.6,319.0 311.1,324.2"/><polygon fill="#0000ef" points="182.6,321.7 176.0,320.7 178.4,318.5 185.0,318.5"/><polygon fill="#0000ef" points="277.6,300.4 271.1,298.9 273.5,298.2 280.0,301.0"/><polygon fill="#0000ef" points="233.4,306.8 226.8,308.0 229.2,301.9 235.8,301.1"/><polygon fill="#8fff70" points="293.2,307.0 286.6,304.0 289.0,305.9 295.6,310.3"/><polygon fill="#0000ef" points="204.7,317.2 198.1,317.8 200.5,312.7 207.1,311.5"/><polygon fill="#00efff" points="317.7,329.2 311.1,324.2 313.5,329.4 320.1,335.2"/><polygon fill="#0000ef" points="255.5,299.9 248.9,300.1 251.3,295.9 257.9,296.6"/><polygon fill="#50ffaf" points="160.4,317.4 153.9,314.4 156.3,316.2 162.8,317.9"/><polygon fill="#0000ef" points="226.8,308.0 220.2,309.2 222.6,303.0 229.2,301.9"/><polygon fill="#70ff8f" points="302.2,314.6 295.6,310.3 298.0,313.5 304.6,319.0"/><polygon fill="#0000ef" points="176.0,320.7 169.4,319.4 171.8,318.5 178.4,318.5"/><polygon fill="#50ffaf" points="443.9,309.2 437.3,319.7 439.7,322.6 446.3,312.5"/><polygon fill="#0000ef" points="198.1,317.8 191.5,318.3 193.9,313.9 200.5,312.7"/><polygon fill="#0000ef" points="271.1,298.9 264.5,297.6 266.9,295.8 273.5,298.2"/><polygon fill="#afff50" points="286.6,304.0 280.0,301.0 282.4,301.7 289.0,305.9"/><polygon fill="#0000ef" points="248.9,300.1 242.4,300.5 244.8,295.6 251.3,295.9"/><polygon fill="#0000ef" points="220.2,309.2 213.7,310.4 216.1,304.3 222.6,303.0"/><polygon fill="#30ffcf" points="311.1,324.2 304.6,319.0 307.0,323.1 313.5,329.4"/><polygon fill="#70ff8f" points="153.9,314.4 147.3,311.3 149.7,314.5 156.3,316.2"/><polygon fill="#0000ef" points="191.5,318.3 185.0,318.5 187.3,315.1 193.9,313.9"/><polygon fill="#0000ef" points="169.4,319.4 162.8,317.9 165.2,318.3 171.8,318.5"/><polygon fill="#0000ef" points="264.5,297.6 257.9,296.6 260.3,293.7 266.9,295.8"/><polygon fill="#0000ef" points="242.4,300.5 235.8,301.1 238.2,295.6 244.8,295.6"/><polygon fill="#00cfff" points="320.1,335.2 313.5,329.4 315.9,334.1 322.5,340.7"/><polygon fill="#8fff70" points="295.6,310.3 289.0,305.9 291.4,308.0 298.0,313.5"/><polygon fill="#0000ef" points="213.7,310.4 207.1,311.5 209.5,305.8 216.1,304.3"/><polygon fill="#0000ef" points="280.0,301.0 273.5,298.2 275.9,297.8 282.4,301.7"/><polygon fill="#0000ef" points="185.0,318.5 178.4,318.5 180.8,316.3 187.3,315.1"/><polygon fill="#70ff8f" points="162.8,317.9 156.3,316.2 158.6,318.0 165.2,318.3"/><polygon fill="#0000ef" points="235.8,301.1 229.2,301.9 231.6,296.1 238.2,295.6"/><polygon fill="#70ff8f" points="304.6,319.0 298.0,313.5 300.4,316.7 307.0,323.1"/><polygon fill="#0000ef" points="257.9,296.6 251.3,295.9 253.7,292.1 260.3,293.7"/><polygon fill="#50ffaf" points="446.3,312.5 439.7,322.6 442.1,325.2 448.7,315.7"/><polygon fill="#0000ef" points="207.1,311.5 200.5,312.7 202.9,307.6 209.5,305.8"/><polygon fill="#10ffef" points="439.7,322.6 433.1,332.5 435.5,334.6 442.1,325.2"/><polygon fill="#0000ef" points="178.4,318.5 171.8,318.5 174.2,317.4 180.8,316.3"/><polygon fill="#0000ef" points="289.0,305.9 282.4,301.7 284.8,302.8 291.4,308.0"/><polygon fill="#0000ef" points="273.5,298.2 266.9,295.8 269.3,294.3 275.9,297.8"/><polygon fill="#10ffef" points="313.5,329.4 307.0,323.1 309.3,327.1 315.9,334.1"/><polygon fill="#0000ef" points="229.2,301.9 222.6,303.0 225.0,297.1 231.6,296.1"/><polygon fill="#70ff8f" points="156.3,316.2 149.7,314.5 152.1,317.8 158.6,318.0"/><polygon fill="#0000ef" points="200.5,312.7 193.9,313.9 196.3,309.5 202.9,307.6"/><polygon fill="#0000ef" points="251.3,295.9 244.8,295.6 247.2,291.0 253.7,292.1"/><polygon fill="#00cfff" points="322.5,340.7 315.9,334.1 318.3,338.5 324.9,345.6"/><polygon fill="#0000ef" points="171.8,318.5 165.2,318.3 167.6,318.6 174.2,317.4"/><polygon fill="#8fff70" points="298.0,313.5 291.4,308.0 293.8,310.3 300.4,316.7"/><polygon fill="#0000ef" points="222.6,303.0 216.1,304.3 218.4,298.5 225.0,297.1"/><polygon fill="#0000ef" points="193.9,313.9 187.3,315.1 189.7,311.7 196.3,309.5"/><polygon fill="#0000ef" points="266.9,295.8 260.3,293.7 262.7,291.2 269.3,294.3"/><polygon fill="#0000ef" points="282.4,301.7 275.9,297.8 278.2,297.8 284.8,302.8"/><polygon fill="#0000ef" points="244.8,295.6 238.2,295.6 240.6,290.6 247.2,291.0"/><polygon fill="#50ffaf" points="307.0,323.1 300.4,316.7 302.8,320.0 309.3,327.1"/><polygon fill="#70ff8f" points="165.2,318.3 158.6,318.0 161.0,319.8 167.6,318.6"/><polygon fill="#50ffaf" points="448.7,315.7 442.1,325.2 444.5,327.7 451.1,318.9"/><polygon fill="#0000ef" points="216.1,304.3 209.5,305.8 211.9,300.4 218.4,298.5"/><polygon fill="#0000ef" points="187.3,315.1 180.8,316.3 183.2,314.0 189.7,311.7"/><polygon fill="#10ffef" points="442.1,325.2 435.5,334.6 437.9,336.3 444.5,327.7"/><polygon fill="#10ffef" points="315.9,334.1 309.3,327.1 311.7,330.9 318.3,338.5"/><polygon fill="#0000ef" points="260.3,293.7 253.7,292.1 256.1,288.8 262.7,291.2"/><polygon fill="#0000ef" points="291.4,308.0 284.8,302.8 287.2,304.1 293.8,310.3"/><polygon fill="#0000ef" points="238.2,295.6 231.6,296.1 234.0,290.8 240.6,290.6"/><polygon fill="#0000ef" points="209.5,305.8 202.9,307.6 205.3,302.7 211.9,300.4"/><polygon fill="#70ff8f" points="158.6,318.0 152.1,317.8 154.5,321.0 161.0,319.8"/><polygon fill="#0000ef" points="180.8,316.3 174.2,317.4 176.6,316.4 183.2,314.0"/><polygon fill="#0000ef" points="275.9,297.8 269.3,294.3 271.7,293.3 278.2,297.8"/><polygon fill="#00cfff" points="324.9,345.6 318.3,338.5 320.7,342.4 327.3,349.8"/><polygon fill="#afff50" points="300.4,316.7 293.8,310.3 296.2,312.8 302.8,320.0"/><polygon fill="#0000ef" points="231.6,296.1 225.0,297.1 227.4,291.6 234.0,290.8"/><polygon fill="#0000ef" points="202.9,307.6 196.3,309.5 198.7,305.4 205.3,302.7"/><polygon fill="#8fff70" points="174.2,317.4 167.6,318.6 170.0,319.0 176.6,316.4"/><polygon fill="#0000ef" points="253.7,292.1 247.2,291.0 249.5,287.1 256.1,288.8"/><polygon fill="#0000ef" points="284.8,302.8 278.2,297.8 280.6,298.2 287.2,304.1"/><polygon fill="#50ffaf" points="309.3,327.1 302.8,320.0 305.2,323.2 311.7,330.9"/><polygon fill="#0000ef" points="269.3,294.3 262.7,291.2 265.1,289.4 271.7,293.3"/><polygon fill="#0000ef" points="196.3,309.5 189.7,311.7 192.1,308.4 198.7,305.4"/><polygon fill="#70ff8f" points="451.1,318.9 444.5,327.7 446.9,330.0 453.5,322.2"/><polygon fill="#0000ef" points="225.0,297.1 218.4,298.5 220.8,293.1 227.4,291.6"/><polygon fill="#8fff70" points="167.6,318.6 161.0,319.8 163.4,321.6 170.0,319.0"/><polygon fill="#30ffcf" points="444.5,327.7 437.9,336.3 440.3,337.6 446.9,330.0"/><polygon fill="#10ffef" points="318.3,338.5 311.7,330.9 314.1,334.5 320.7,342.4"/><polygon fill="#0000ef" points="247.2,291.0 240.6,290.6 243.0,286.2 249.5,287.1"/><polygon fill="#0000ef" points="189.7,311.7 183.2,314.0 185.6,311.8 192.1,308.4"/><polygon fill="#0000ef" points="293.8,310.3 287.2,304.1 289.6,305.8 296.2,312.8"/><polygon fill="#0000ef" points="218.4,298.5 211.9,300.4 214.3,295.3 220.8,293.1"/><polygon fill="#8fff70" points="161.0,319.8 154.5,321.0 156.9,324.2 163.4,321.6"/><polygon fill="#0000ef" points="262.7,291.2 256.1,288.8 258.5,286.3 265.1,289.4"/><polygon fill="#0000ef" points="278.2,297.8 271.7,293.3 274.1,292.9 280.6,298.2"/><polygon fill="#0000ef" points="183.2,314.0 176.6,316.4 179.0,315.5 185.6,311.8"/><polygon fill="#0000ef" points="240.6,290.6 234.0,290.8 236.4,286.1 243.0,286.2"/><polygon fill="#afff50" points="302.8,320.0 296.2,312.8 298.6,315.4 305.2,323.2"/><polygon fill="#0000ef" points="211.9,300.4 205.3,302.7 207.7,298.1 214.3,295.3"/><polygon fill="#afff50" points="176.6,316.4 170.0,319.0 172.4,319.4 179.0,315.5"/><polygon fill="#50ffaf" points="311.7,330.9 305.2,323.2 307.6,326.4 314.1,334.5"/><polygon fill="#0000ef" points="287.2,304.1 280.6,298.2 283.0,299.2 289.6,305.8"/><polygon fill="#0000ef" points="205.3,302.7 198.7,305.4 201.1,301.6 207.7,298.1"/><polygon fill="#0000ef" points="256.1,288.8 249.5,287.1 251.9,284.0 258.5,286.3"/><polygon fill="#0000ef" points="234.0,290.8 227.4,291.6 229.8,286.8 236.4,286.1"/><polygon fill="#70ff8f" points="453.5,322.2 446.9,330.0 449.3,332.1 455.9,325.4"/><polygon fill="#0000ef" points="271.7,293.3 265.1,289.4 267.5,288.3 274.1,292.9"/><polygon fill="#8fff70" points="170.0,319.0 163.4,321.6 165.8,323.4 172.4,319.4"/><polygon fill="#10ffef" points="320.7,342.4 314.1,334.5 316.5,337.9 323.1,345.8"/><polygon fill="#30ffcf" points="446.9,330.0 440.3,337.6 442.7,338.7 449.3,332.1"/><polygon fill="#0000ef" points="198.7,305.4 192.1,308.4 194.5,305.5 201.1,301.6"/><polygon fill="#10ffef" points="440.3,337.6 433.7,345.0 436.1,344.9 442.7,338.7"/><polygon fill="#0000ef" points="296.2,312.8 289.6,305.8 292.0,307.9 298.6,315.4"/><polygon fill="#0000ef" points="227.4,291.6 220.8,293.1 223.2,288.4 229.8,286.8"/><polygon fill="#8fff70" points="163.4,321.6 156.9,324.2 159.2,327.5 165.8,323.4"/><polygon fill="#0000ef" points="249.5,287.1 243.0,286.2 245.4,282.6 251.9,284.0"/><polygon fill="#0000ef" points="192.1,308.4 185.6,311.8 188.0,309.9 194.5,305.5"/><polygon fill="#0000ef" points="280.6,298.2 274.1,292.9 276.5,293.3 283.0,299.2"/><polygon fill="#afff50" points="305.2,323.2 298.6,315.4 301.0,318.3 307.6,326.4"/><polygon fill="#0000ef" points="265.1,289.4 258.5,286.3 260.9,284.6 267.5,288.3"/><polygon fill="#0000ef" points="220.8,293.1 214.3,295.3 216.7,290.9 223.2,288.4"/><polygon fill="#efff10" points="185.6,311.8 179.0,315.5 181.4,314.8 188.0,309.9"/><polygon fill="#50ffaf" points="314.1,334.5 307.6,326.4 309.9,329.6 316.5,337.9"/><polygon fill="#0000ef" points="243.0,286.2 236.4,286.1 238.8,282.2 245.4,282.6"/><polygon fill="#cfff30" points="179.0,315.5 172.4,319.4 174.8,319.9 181.4,314.8"/><polygon fill="#0000ef" points="214.3,295.3 207.7,298.1 210.1,294.2 216.7,290.9"/><polygon fill="#0000ef" points="289.6,305.8 283.0,299.2 285.4,300.8 292.0,307.9"/><polygon fill="#70ff8f" points="455.9,325.4 449.3,332.1 451.7,334.1 458.3,328.6"/><polygon fill="#10ffef" points="323.1,345.8 316.5,337.9 318.9,341.0 325.5,348.8"/><polygon fill="#afff50" points="172.4,319.4 165.8,323.4 168.2,325.2 174.8,319.9"/><polygon fill="#0000ef" points="258.5,286.3 251.9,284.0 254.3,281.8 260.9,284.6"/><polygon fill="#50ffaf" points="449.3,332.1 442.7,338.7 445.1,339.4 451.7,334.1"/><polygon fill="#0000ef" points="274.1,292.9 267.5,288.3 269.9,288.1 276.5,293.3"/><polygon fill="#0000ef" points="207.7,298.1 201.1,301.6 203.5,298.3 210.1,294.2"/><polygon fill="#0000ef" points="236.4,286.1 229.8,286.8 232.2,282.9 238.8,282.2"/><polygon fill="#0000ef" points="298.6,315.4 292.0,307.9 294.4,310.5 301.0,318.3"/><polygon fill="#10ffef" points="442.7,338.7 436.1,344.9 438.5,344.5 445.1,339.4"/><polygon fill="#8fff70" points="165.8,323.4 159.2,327.5 161.6,330.7 168.2,325.2"/><polygon fill="#0000ef" points="201.1,301.6 194.5,305.5 196.9,303.1 203.5,298.3"/><polygon fill="#afff50" points="307.6,326.4 301.0,318.3 303.4,321.4 309.9,329.6"/><polygon fill="#0000ef" points="229.8,286.8 223.2,288.4 225.6,284.6 232.2,282.9"/><polygon fill="#0000ef" points="251.9,284.0 245.4,282.6 247.8,280.0 254.3,281.8"/><polygon fill="#0000ef" points="283.0,299.2 276.5,293.3 278.9,294.4 285.4,300.8"/><polygon fill="#0000ef" points="194.5,305.5 188.0,309.9 190.3,308.5 196.9,303.1"/><polygon fill="#0000ef" points="267.5,288.3 260.9,284.6 263.3,283.8 269.9,288.1"/><polygon fill="#50ffaf" points="316.5,337.9 309.9,329.6 312.3,332.9 318.9,341.0"/><polygon fill="#ffef00" points="188.0,309.9 181.4,314.8 183.8,314.4 190.3,308.5"/><polygon fill="#0000ef" points="223.2,288.4 216.7,290.9 219.0,287.3 225.6,284.6"/><polygon fill="#0000ef" points="292.0,307.9 285.4,300.8 287.8,303.1 294.4,310.5"/><polygon fill="#70ff8f" points="458.3,328.6 451.7,334.1 454.1,335.9 460.7,331.8"/><polygon fill="#efff10" points="181.4,314.8 174.8,319.9 177.2,320.6 183.8,314.4"/><polygon fill="#0000ef" points="325.5,348.8 318.9,341.0 321.3,343.9 327.9,351.4"/><polygon fill="#0000ef" points="245.4,282.6 238.8,282.2 241.2,279.4 247.8,280.0"/><polygon fill="#0000ef" points="216.7,290.9 210.1,294.2 212.5,291.1 219.0,287.3"/><polygon fill="#afff50" points="174.8,319.9 168.2,325.2 170.6,327.2 177.2,320.6"/><polygon fill="#50ffaf" points="451.7,334.1 445.1,339.4 447.5,339.9 454.1,335.9"/><polygon fill="#0000ef" points="276.5,293.3 269.9,288.1 272.3,288.8 278.9,294.4"/><polygon fill="#efff10" points="301.0,318.3 294.4,310.5 296.8,313.5 303.4,321.4"/><polygon fill="#0000ef" points="260.9,284.6 254.3,281.8 256.7,280.6 263.3,283.8"/><polygon fill="#8fff70" points="168.2,325.2 161.6,330.7 164.0,333.9 170.6,327.2"/><polygon fill="#30ffcf" points="445.1,339.4 438.5,344.5 440.9,343.8 447.5,339.9"/><polygon fill="#0000ef" points="210.1,294.2 203.5,298.3 205.9,295.7 212.5,291.1"/><polygon fill="#0000ef" points="238.8,282.2 232.2,282.9 234.6,280.0 241.2,279.4"/><polygon fill="#afff50" points="309.9,329.6 303.4,321.4 305.8,324.8 312.3,332.9"/><polygon fill="#0000ef" points="203.5,298.3 196.9,303.1 199.3,301.2 205.9,295.7"/><polygon fill="#0000ef" points="285.4,300.8 278.9,294.4 281.2,296.3 287.8,303.1"/><polygon fill="#50ffaf" points="318.9,341.0 312.3,332.9 314.7,336.1 321.3,343.9"/><polygon fill="#0000ef" points="254.3,281.8 247.8,280.0 250.1,278.6 256.7,280.6"/><polygon fill="#ffaf00" points="196.9,303.1 190.3,308.5 192.7,307.5 199.3,301.2"/><polygon fill="#0000ef" points="232.2,282.9 225.6,284.6 228.0,281.8 234.6,280.0"/><polygon fill="#0000ef" points="269.9,288.1 263.3,283.8 265.7,284.1 272.3,288.8"/><polygon fill="#ffcf00" points="190.3,308.5 183.8,314.4 186.2,314.3 192.7,307.5"/><polygon fill="#ffcf00" points="294.4,310.5 287.8,303.1 290.2,306.0 296.8,313.5"/><polygon fill="#70ff8f" points="460.7,331.8 454.1,335.9 456.5,337.7 463.0,335.1"/><polygon fill="#efff10" points="183.8,314.4 177.2,320.6 179.6,321.7 186.2,314.3"/><polygon fill="#0000ef" points="225.6,284.6 219.0,287.3 221.4,284.7 228.0,281.8"/><polygon fill="#cfff30" points="177.2,320.6 170.6,327.2 173.0,329.3 179.6,321.7"/><polygon fill="#efff10" points="303.4,321.4 296.8,313.5 299.2,316.9 305.8,324.8"/><polygon fill="#0000ef" points="247.8,280.0 241.2,279.4 243.6,277.8 250.1,278.6"/><polygon fill="#70ff8f" points="454.1,335.9 447.5,339.9 449.9,340.3 456.5,337.7"/><polygon fill="#0000ef" points="278.9,294.4 272.3,288.8 274.7,290.4 281.2,296.3"/><polygon fill="#8fff70" points="170.6,327.2 164.0,333.9 166.4,337.1 173.0,329.3"/><polygon fill="#0000ef" points="219.0,287.3 212.5,291.1 214.9,288.8 221.4,284.7"/><polygon fill="#0000ef" points="263.3,283.8 256.7,280.6 259.1,280.6 265.7,284.1"/><polygon fill="#afff50" points="312.3,332.9 305.8,324.8 308.2,328.4 314.7,336.1"/><polygon fill="#50ffaf" points="447.5,339.9 440.9,343.8 443.3,342.9 449.9,340.3"/><polygon fill="#0000ef" points="212.5,291.1 205.9,295.7 208.3,294.0 214.9,288.8"/><polygon fill="#0000ef" points="241.2,279.4 234.6,280.0 237.0,278.3 243.6,277.8"/><polygon fill="#ff7000" points="287.8,303.1 281.2,296.3 283.6,299.1 290.2,306.0"/><polygon fill="#50ffaf" points="321.3,343.9 314.7,336.1 317.1,339.3 323.7,346.5"/><polygon fill="#0000ef" points="440.9,343.8 434.3,347.5 436.7,345.3 443.3,342.9"/><polygon fill="#ff7000" points="205.9,295.7 199.3,301.2 201.7,300.1 208.3,294.0"/><polygon fill="#0000ef" points="272.3,288.8 265.7,284.1 268.1,285.6 274.7,290.4"/><polygon fill="#0000ef" points="256.7,280.6 250.1,278.6 252.5,278.4 259.1,280.6"/><polygon fill="#ffcf00" points="296.8,313.5 290.2,306.0 292.6,309.5 299.2,316.9"/><polygon fill="#ff8f00" points="199.3,301.2 192.7,307.5 195.1,307.1 201.7,300.1"/><polygon fill="#70ff8f" points="463.0,335.1 456.5,337.7 458.9,339.5 465.4,338.3"/><polygon fill="#0000ef" points="234.6,280.0 228.0,281.8 230.4,280.2 237.0,278.3"/><polygon fill="#ffaf00" points="192.7,307.5 186.2,314.3 188.6,314.8 195.1,307.1"/><polygon fill="#ffef00" points="186.2,314.3 179.6,321.7 182.0,323.0 188.6,314.8"/><polygon fill="#efff10" points="305.8,324.8 299.2,316.9 301.6,320.8 308.2,328.4"/><polygon fill="#cfff30" points="179.6,321.7 173.0,329.3 175.4,331.6 182.0,323.0"/><polygon fill="#0000ef" points="228.0,281.8 221.4,284.7 223.8,283.3 230.4,280.2"/><polygon fill="#70ff8f" points="456.5,337.7 449.9,340.3 452.3,340.7 458.9,339.5"/><polygon fill="#ff5000" points="281.2,296.3 274.7,290.4 277.1,293.1 283.6,299.1"/><polygon fill="#8fff70" points="173.0,329.3 166.4,337.1 168.8,340.4 175.4,331.6"/><polygon fill="#0000ef" points="250.1,278.6 243.6,277.8 246.0,277.5 252.5,278.4"/><polygon fill="#afff50" points="314.7,336.1 308.2,328.4 310.6,332.2 317.1,339.3"/><polygon fill="#ef0000" points="265.7,284.1 259.1,280.6 261.5,281.9 268.1,285.6"/><polygon fill="#ef0000" points="221.4,284.7 214.9,288.8 217.3,287.7 223.8,283.3"/><polygon fill="#ff7000" points="290.2,306.0 283.6,299.1 286.0,302.8 292.6,309.5"/><polygon fill="#70ff8f" points="449.9,340.3 443.3,342.9 445.7,341.9 452.3,340.7"/><polygon fill="#50ffaf" points="323.7,346.5 317.1,339.3 319.5,342.6 326.1,349.0"/><polygon fill="#ff1000" points="214.9,288.8 208.3,294.0 210.7,293.3 217.3,287.7"/><polygon fill="#0000ef" points="243.6,277.8 237.0,278.3 239.4,277.9 246.0,277.5"/><polygon fill="#ffcf00" points="299.2,316.9 292.6,309.5 295.0,313.7 301.6,320.8"/><polygon fill="#ff1000" points="274.7,290.4 268.1,285.6 270.5,288.2 277.1,293.1"/><polygon fill="#ff5000" points="208.3,294.0 201.7,300.1 204.1,299.9 210.7,293.3"/><polygon fill="#0000ef" points="443.3,342.9 436.7,345.3 439.1,343.0 445.7,341.9"/><polygon fill="#8fff70" points="465.4,338.3 458.9,339.5 461.3,341.3 467.8,341.5"/><polygon fill="#cf0000" points="259.1,280.6 252.5,278.4 254.9,279.5 261.5,281.9"/><polygon fill="#ff7000" points="201.7,300.1 195.1,307.1 197.5,307.4 204.1,299.9"/><polygon fill="#efff10" points="308.2,328.4 301.6,320.8 304.0,325.2 310.6,332.2"/><polygon fill="#af0000" points="237.0,278.3 230.4,280.2 232.8,279.8 239.4,277.9"/><polygon fill="#ffaf00" points="195.1,307.1 188.6,314.8 190.9,315.8 197.5,307.4"/><polygon fill="#ffcf00" points="188.6,314.8 182.0,323.0 184.4,324.7 190.9,315.8"/><polygon fill="#efff10" points="182.0,323.0 175.4,331.6 177.8,334.1 184.4,324.7"/><polygon fill="#ff5000" points="283.6,299.1 277.1,293.1 279.5,296.9 286.0,302.8"/><polygon fill="#afff50" points="175.4,331.6 168.8,340.4 171.2,343.6 177.8,334.1"/><polygon fill="#8fff70" points="458.9,339.5 452.3,340.7 454.7,341.0 461.3,341.3"/><polygon fill="#afff50" points="317.1,339.3 310.6,332.2 312.9,336.2 319.5,342.6"/><polygon fill="#cf0000" points="230.4,280.2 223.8,283.3 226.2,283.1 232.8,279.8"/><polygon fill="#af0000" points="252.5,278.4 246.0,277.5 248.4,278.5 254.9,279.5"/><polygon fill="#cf0000" points="268.1,285.6 261.5,281.9 263.9,284.5 270.5,288.2"/><polygon fill="#ff8f00" points="292.6,309.5 286.0,302.8 288.4,307.3 295.0,313.7"/><polygon fill="#cf0000" points="223.8,283.3 217.3,287.7 219.7,287.7 226.2,283.1"/><polygon fill="#70ff8f" points="326.1,349.0 319.5,342.6 321.9,345.8 328.5,351.3"/><polygon fill="#0000ef" points="452.3,340.7 445.7,341.9 448.1,340.8 454.7,341.0"/><polygon fill="#ffcf00" points="301.6,320.8 295.0,313.7 297.4,318.6 304.0,325.2"/><polygon fill="#af0000" points="246.0,277.5 239.4,277.9 241.8,279.0 248.4,278.5"/><polygon fill="#ef0000" points="217.3,287.7 210.7,293.3 213.1,293.6 219.7,287.7"/><polygon fill="#ff1000" points="277.1,293.1 270.5,288.2 272.9,292.0 279.5,296.9"/><polygon fill="#8fff70" points="467.8,341.5 461.3,341.3 463.6,343.1 470.2,344.8"/><polygon fill="#af0000" points="261.5,281.9 254.9,279.5 257.3,282.0 263.9,284.5"/><polygon fill="#ff3000" points="210.7,293.3 204.1,299.9 206.5,300.6 213.1,293.6"/><polygon fill="#efff10" points="310.6,332.2 304.0,325.2 306.4,329.9 312.9,336.2"/><polygon fill="#0000ef" points="445.7,341.9 439.1,343.0 441.5,340.8 448.1,340.8"/><polygon fill="#ff5000" points="204.1,299.9 197.5,307.4 199.9,308.6 206.5,300.6"/><polygon fill="#ff5000" points="286.0,302.8 279.5,296.9 281.8,301.7 288.4,307.3"/><polygon fill="#ff8f00" points="197.5,307.4 190.9,315.8 193.3,317.4 199.9,308.6"/><polygon fill="#af0000" points="239.4,277.9 232.8,279.8 235.2,280.9 241.8,279.0"/><polygon fill="#ffcf00" points="190.9,315.8 184.4,324.7 186.8,326.8 193.3,317.4"/><polygon fill="#efff10" points="184.4,324.7 177.8,334.1 180.2,336.7 186.8,326.8"/><polygon fill="#afff50" points="177.8,334.1 171.2,343.6 173.6,346.8 180.2,336.7"/><polygon fill="#8fff70" points="319.5,342.6 312.9,336.2 315.3,340.3 321.9,345.8"/><polygon fill="#8fff70" points="461.3,341.3 454.7,341.0 457.1,341.4 463.6,343.1"/><polygon fill="#cf0000" points="270.5,288.2 263.9,284.5 266.3,288.4 272.9,292.0"/><polygon fill="#ff8f00" points="295.0,313.7 288.4,307.3 290.8,312.6 297.4,318.6"/><polygon fill="#af0000" points="254.9,279.5 248.4,278.5 250.8,281.0 257.3,282.0"/><polygon fill="#af0000" points="232.8,279.8 226.2,283.1 228.6,284.2 235.2,280.9"/><polygon fill="#ffcf00" points="304.0,325.2 297.4,318.6 299.8,324.1 306.4,329.9"/><polygon fill="#cf0000" points="226.2,283.1 219.7,287.7 222.0,289.0 228.6,284.2"/><polygon fill="#ff1000" points="279.5,296.9 272.9,292.0 275.3,297.0 281.8,301.7"/><polygon fill="#0000ef" points="454.7,341.0 448.1,340.8 450.5,339.9 457.1,341.4"/><polygon fill="#8f0000" points="248.4,278.5 241.8,279.0 244.2,281.5 250.8,281.0"/><polygon fill="#ef0000" points="219.7,287.7 213.1,293.6 215.5,295.0 222.0,289.0"/><polygon fill="#8fff70" points="470.2,344.8 463.6,343.1 466.0,344.9 472.6,348.0"/><polygon fill="#cfff30" points="312.9,336.2 306.4,329.9 308.8,335.1 315.3,340.3"/><polygon fill="#af0000" points="263.9,284.5 257.3,282.0 259.7,286.0 266.3,288.4"/><polygon fill="#ff1000" points="213.1,293.6 206.5,300.6 208.9,302.2 215.5,295.0"/><polygon fill="#ff5000" points="288.4,307.3 281.8,301.7 284.2,307.4 290.8,312.6"/><polygon fill="#ff5000" points="206.5,300.6 199.9,308.6 202.3,310.5 208.9,302.2"/><polygon fill="#ff8f00" points="199.9,308.6 193.3,317.4 195.7,319.6 202.3,310.5"/><polygon fill="#8f0000" points="241.8,279.0 235.2,280.9 237.6,283.4 244.2,281.5"/><polygon fill="#ffcf00" points="193.3,317.4 186.8,326.8 189.2,329.4 195.7,319.6"/><polygon fill="#afff50" points="180.2,336.7 173.6,346.8 176.0,350.1 182.6,339.6"/><polygon fill="#efff10" points="186.8,326.8 180.2,336.7 182.6,339.6 189.2,329.4"/><polygon fill="#0000ef" points="448.1,340.8 441.5,340.8 443.9,338.6 450.5,339.9"/><polygon fill="#8fff70" points="321.9,345.8 315.3,340.3 317.7,344.7 324.3,349.0"/><polygon fill="#ffaf00" points="297.4,318.6 290.8,312.6 293.2,318.8 299.8,324.1"/><polygon fill="#ef0000" points="272.9,292.0 266.3,288.4 268.7,293.5 275.3,297.0"/><polygon fill="#af0000" points="257.3,282.0 250.8,281.0 253.1,285.0 259.7,286.0"/><polygon fill="#afff50" points="463.6,343.1 457.1,341.4 459.5,341.9 466.0,344.9"/><polygon fill="#af0000" points="235.2,280.9 228.6,284.2 231.0,286.8 237.6,283.4"/><polygon fill="#ffef00" points="306.4,329.9 299.8,324.1 302.2,330.1 308.8,335.1"/><polygon fill="#ff3000" points="281.8,301.7 275.3,297.0 277.7,303.2 284.2,307.4"/><polygon fill="#0000ef" points="441.5,340.8 434.9,340.8 437.3,337.6 443.9,338.6"/><polygon fill="#af0000" points="228.6,284.2 222.0,289.0 224.4,291.6 231.0,286.8"/><polygon fill="#8f0000" points="250.8,281.0 244.2,281.5 246.6,285.4 253.1,285.0"/><polygon fill="#cfff30" points="315.3,340.3 308.8,335.1 311.2,340.5 317.7,344.7"/><polygon fill="#cf0000" points="266.3,288.4 259.7,286.0 262.1,291.3 268.7,293.5"/><polygon fill="#0000ef" points="457.1,341.4 450.5,339.9 452.9,339.2 459.5,341.9"/><polygon fill="#ff7000" points="290.8,312.6 284.2,307.4 286.6,314.2 293.2,318.8"/><polygon fill="#cf0000" points="222.0,289.0 215.5,295.0 217.9,297.7 224.4,291.6"/><polygon fill="#8fff70" points="472.6,348.0 466.0,344.9 468.4,346.9 475.0,351.2"/><polygon fill="#ff1000" points="215.5,295.0 208.9,302.2 211.3,305.0 217.9,297.7"/><polygon fill="#ff5000" points="208.9,302.2 202.3,310.5 204.7,313.3 211.3,305.0"/><polygon fill="#ffaf00" points="299.8,324.1 293.2,318.8 295.6,325.6 302.2,330.1"/><polygon fill="#8f0000" points="244.2,281.5 237.6,283.4 240.0,287.4 246.6,285.4"/><polygon fill="#8fff70" points="324.3,349.0 317.7,344.7 320.1,349.2 326.7,352.3"/><polygon fill="#ff7000" points="202.3,310.5 195.7,319.6 198.1,322.5 204.7,313.3"/><polygon fill="#afff50" points="182.6,339.6 176.0,350.1 178.4,353.3 185.0,342.7"/><polygon fill="#ef0000" points="275.3,297.0 268.7,293.5 271.1,300.0 277.7,303.2"/><polygon fill="#efff10" points="189.2,329.4 182.6,339.6 185.0,342.7 191.6,332.4"/><polygon fill="#ffcf00" points="195.7,319.6 189.2,329.4 191.6,332.4 198.1,322.5"/><polygon fill="#af0000" points="259.7,286.0 253.1,285.0 255.5,290.4 262.1,291.3"/><polygon fill="#0000ef" points="450.5,339.9 443.9,338.6 446.3,336.7 452.9,339.2"/><polygon fill="#efff10" points="308.8,335.1 302.2,330.1 304.6,336.6 311.2,340.5"/><polygon fill="#af0000" points="237.6,283.4 231.0,286.8 233.4,290.7 240.0,287.4"/><polygon fill="#afff50" points="466.0,344.9 459.5,341.9 461.9,342.7 468.4,346.9"/><polygon fill="#ff5000" points="284.2,307.4 277.7,303.2 280.1,310.4 286.6,314.2"/><polygon fill="#af0000" points="231.0,286.8 224.4,291.6 226.8,295.4 233.4,290.7"/><polygon fill="#cf0000" points="268.7,293.5 262.1,291.3 264.5,298.0 271.1,300.0"/><polygon fill="#af0000" points="253.1,285.0 246.6,285.4 249.0,290.9 255.5,290.4"/><polygon fill="#afff50" points="317.7,344.7 311.2,340.5 313.5,346.2 320.1,349.2"/><polygon fill="#ff8f00" points="293.2,318.8 286.6,314.2 289.0,321.7 295.6,325.6"/><polygon fill="#0000ef" points="443.9,338.6 437.3,337.6 439.7,334.6 446.3,336.7"/><polygon fill="#cf0000" points="224.4,291.6 217.9,297.7 220.3,301.5 226.8,295.4"/><polygon fill="#8fff70" points="475.0,351.2 468.4,346.9 470.8,349.0 477.4,354.5"/><polygon fill="#ffcf00" points="302.2,330.1 295.6,325.6 298.0,333.0 304.6,336.6"/><polygon fill="#0000ef" points="459.5,341.9 452.9,339.2 455.3,338.8 461.9,342.7"/><polygon fill="#ff1000" points="217.9,297.7 211.3,305.0 213.7,308.7 220.3,301.5"/><polygon fill="#ff1000" points="277.7,303.2 271.1,300.0 273.5,307.6 280.1,310.4"/><polygon fill="#af0000" points="246.6,285.4 240.0,287.4 242.4,292.8 249.0,290.9"/><polygon fill="#ff5000" points="211.3,305.0 204.7,313.3 207.1,317.0 213.7,308.7"/><polygon fill="#ff7000" points="204.7,313.3 198.1,322.5 200.5,326.1 207.1,317.0"/><polygon fill="#afff50" points="185.0,342.7 178.4,353.3 180.8,356.5 187.4,346.1"/><polygon fill="#cf0000" points="262.1,291.3 255.5,290.4 257.9,297.2 264.5,298.0"/><polygon fill="#efff10" points="191.6,332.4 185.0,342.7 187.4,346.1 193.9,335.8"/><polygon fill="#ffcf00" points="198.1,322.5 191.6,332.4 193.9,335.8 200.5,326.1"/><polygon fill="#efff10" points="311.2,340.5 304.6,336.6 307.0,343.4 313.5,346.2"/><polygon fill="#ff7000" points="286.6,314.2 280.1,310.4 282.5,318.6 289.0,321.7"/><polygon fill="#af0000" points="240.0,287.4 233.4,290.7 235.8,296.0 242.4,292.8"/><polygon fill="#0000ef" points="468.4,346.9 461.9,342.7 464.3,343.7 470.8,349.0"/><polygon fill="#ef0000" points="271.1,300.0 264.5,298.0 266.9,305.9 273.5,307.6"/><polygon fill="#0000ef" points="452.9,339.2 446.3,336.7 448.7,335.2 455.3,338.8"/><polygon fill="#ffaf00" points="295.6,325.6 289.0,321.7 291.4,330.0 298.0,333.0"/><polygon fill="#af0000" points="255.5,290.4 249.0,290.9 251.4,297.7 257.9,297.2"/><polygon fill="#cf0000" points="233.4,290.7 226.8,295.4 229.2,300.6 235.8,296.0"/><polygon fill="#afff50" points="320.1,349.2 313.5,346.2 315.9,352.1 322.5,353.8"/><polygon fill="#ffef00" points="304.6,336.6 298.0,333.0 300.4,341.0 307.0,343.4"/><polygon fill="#ef0000" points="226.8,295.4 220.3,301.5 222.6,306.5 229.2,300.6"/><polygon fill="#ff5000" points="280.1,310.4 273.5,307.6 275.9,316.3 282.5,318.6"/><polygon fill="#8fff70" points="477.4,354.5 470.8,349.0 473.2,351.3 479.8,357.7"/><polygon fill="#af0000" points="249.0,290.9 242.4,292.8 244.8,299.5 251.4,297.7"/><polygon fill="#ff1000" points="220.3,301.5 213.7,308.7 216.1,313.5 222.6,306.5"/><polygon fill="#ef0000" points="264.5,298.0 257.9,297.2 260.3,305.3 266.9,305.9"/><polygon fill="#ff5000" points="213.7,308.7 207.1,317.0 209.5,321.5 216.1,313.5"/><polygon fill="#0000ef" points="446.3,336.7 439.7,334.6 442.1,332.2 448.7,335.2"/><polygon fill="#ff8f00" points="289.0,321.7 282.5,318.6 284.8,327.6 291.4,330.0"/><polygon fill="#0000ef" points="461.9,342.7 455.3,338.8 457.7,338.7 464.3,343.7"/><polygon fill="#ff8f00" points="207.1,317.0 200.5,326.1 202.9,330.3 209.5,321.5"/><polygon fill="#cfff30" points="313.5,346.2 307.0,343.4 309.4,350.6 315.9,352.1"/><polygon fill="#ffcf00" points="200.5,326.1 193.9,335.8 196.3,339.8 202.9,330.3"/><polygon fill="#afff50" points="187.4,346.1 180.8,356.5 183.2,359.8 189.8,349.6"/><polygon fill="#efff10" points="193.9,335.8 187.4,346.1 189.8,349.6 196.3,339.8"/><polygon fill="#cf0000" points="242.4,292.8 235.8,296.0 238.2,302.7 244.8,299.5"/><polygon fill="#ff3000" points="273.5,307.6 266.9,305.9 269.3,314.9 275.9,316.3"/><polygon fill="#ffcf00" points="298.0,333.0 291.4,330.0 293.8,338.9 300.4,341.0"/><polygon fill="#cf0000" points="257.9,297.2 251.4,297.7 253.7,305.8 260.3,305.3"/><polygon fill="#cf0000" points="235.8,296.0 229.2,300.6 231.6,307.1 238.2,302.7"/><polygon fill="#8fff70" points="322.5,353.8 315.9,352.1 318.3,358.2 324.9,358.4"/><polygon fill="#0000ef" points="439.7,334.6 433.2,333.1 435.5,329.8 442.1,332.2"/><polygon fill="#0000ef" points="470.8,349.0 464.3,343.7 466.6,345.1 473.2,351.3"/><polygon fill="#ff7000" points="282.5,318.6 275.9,316.3 278.3,325.9 284.8,327.6"/><polygon fill="#efff10" points="307.0,343.4 300.4,341.0 302.8,349.3 309.4,350.6"/><polygon fill="#0000ef" points="455.3,338.8 448.7,335.2 451.1,334.2 457.7,338.7"/><polygon fill="#ef0000" points="229.2,300.6 222.6,306.5 225.0,312.6 231.6,307.1"/><polygon fill="#cf0000" points="251.4,297.7 244.8,299.5 247.2,307.6 253.7,305.8"/><polygon fill="#ff1000" points="266.9,305.9 260.3,305.3 262.7,314.5 269.3,314.9"/><polygon fill="#ffaf00" points="291.4,330.0 284.8,327.6 287.2,337.3 293.8,338.9"/><polygon fill="#ff3000" points="222.6,306.5 216.1,313.5 218.5,319.3 225.0,312.6"/><polygon fill="#afff50" points="479.8,357.7 473.2,351.3 475.6,353.7 482.2,360.9"/><polygon fill="#ff5000" points="216.1,313.5 209.5,321.5 211.9,326.8 218.5,319.3"/><polygon fill="#afff50" points="315.9,352.1 309.4,350.6 311.8,358.0 318.3,358.2"/><polygon fill="#ff8f00" points="209.5,321.5 202.9,330.3 205.3,335.2 211.9,326.8"/><polygon fill="#ff5000" points="275.9,316.3 269.3,314.9 271.7,324.9 278.3,325.9"/><polygon fill="#ef0000" points="244.8,299.5 238.2,302.7 240.6,310.6 247.2,307.6"/><polygon fill="#ffcf00" points="202.9,330.3 196.3,339.8 198.7,344.1 205.3,335.2"/><polygon fill="#efff10" points="300.4,341.0 293.8,338.9 296.2,348.3 302.8,349.3"/><polygon fill="#efff10" points="196.3,339.8 189.8,349.6 192.2,353.4 198.7,344.1"/><polygon fill="#afff50" points="189.8,349.6 183.2,359.8 185.6,363.0 192.2,353.4"/><polygon fill="#ff1000" points="260.3,305.3 253.7,305.8 256.1,315.2 262.7,314.5"/><polygon fill="#0000ef" points="464.3,343.7 457.7,338.7 460.1,339.2 466.6,345.1"/><polygon fill="#0000ef" points="448.7,335.2 442.1,332.2 444.5,330.4 451.1,334.2"/><polygon fill="#ffaf00" points="284.8,327.6 278.3,325.9 280.7,336.3 287.2,337.3"/><polygon fill="#ef0000" points="238.2,302.7 231.6,307.1 234.0,314.7 240.6,310.6"/><polygon fill="#afff50" points="309.4,350.6 302.8,349.3 305.2,357.9 311.8,358.0"/><polygon fill="#8fff70" points="324.9,358.4 318.3,358.2 320.7,364.3 327.3,363.1"/><polygon fill="#ff5000" points="269.3,314.9 262.7,314.5 265.1,324.8 271.7,324.9"/><polygon fill="#ff1000" points="253.7,305.8 247.2,307.6 249.6,316.9 256.1,315.2"/><polygon fill="#ff1000" points="231.6,307.1 225.0,312.6 227.4,319.8 234.0,314.7"/><polygon fill="#ffef00" points="293.8,338.9 287.2,337.3 289.6,347.6 296.2,348.3"/><polygon fill="#0000ef" points="473.2,351.3 466.6,345.1 469.0,346.8 475.6,353.7"/><polygon fill="#ff5000" points="225.0,312.6 218.5,319.3 220.9,326.0 227.4,319.8"/><polygon fill="#ff8f00" points="278.3,325.9 271.7,324.9 274.1,335.8 280.7,336.3"/><polygon fill="#0000ef" points="442.1,332.2 435.5,329.8 437.9,327.2 444.5,330.4"/><polygon fill="#0000ef" points="457.7,338.7 451.1,334.2 453.5,333.9 460.1,339.2"/><polygon fill="#8fff70" points="318.3,358.2 311.8,358.0 314.2,365.5 320.7,364.3"/><polygon fill="#ff7000" points="218.5,319.3 211.9,326.8 214.3,333.0 220.9,326.0"/><polygon fill="#ff1000" points="247.2,307.6 240.6,310.6 243.0,319.6 249.6,316.9"/><polygon fill="#cfff30" points="302.8,349.3 296.2,348.3 298.6,358.0 305.2,357.9"/><polygon fill="#ff5000" points="262.7,314.5 256.1,315.2 258.5,325.6 265.1,324.8"/><polygon fill="#afff50" points="482.2,360.9 475.6,353.7 478.0,356.4 484.6,364.1"/><polygon fill="#ffaf00" points="211.9,326.8 205.3,335.2 207.7,340.6 214.3,333.0"/><polygon fill="#ffcf00" points="287.2,337.3 280.7,336.3 283.1,347.2 289.6,347.6"/><polygon fill="#ffcf00" points="205.3,335.2 198.7,344.1 201.1,348.8 207.7,340.6"/><polygon fill="#efff10" points="198.7,344.1 192.2,353.4 194.5,357.4 201.1,348.8"/><polygon fill="#afff50" points="192.2,353.4 185.6,363.0 188.0,366.2 194.5,357.4"/><polygon fill="#ff3000" points="240.6,310.6 234.0,314.7 236.4,323.4 243.0,319.6"/><polygon fill="#ff8f00" points="271.7,324.9 265.1,324.8 267.5,336.0 274.1,335.8"/><polygon fill="#8fff70" points="311.8,358.0 305.2,357.9 307.6,366.7 314.2,365.5"/><polygon fill="#ff5000" points="256.1,315.2 249.6,316.9 252.0,327.2 258.5,325.6"/><polygon fill="#0000ef" points="466.6,345.1 460.1,339.2 462.5,340.2 469.0,346.8"/><polygon fill="#cfff30" points="296.2,348.3 289.6,347.6 292.0,358.2 298.6,358.0"/><polygon fill="#ff5000" points="234.0,314.7 227.4,319.8 229.8,328.0 236.4,323.4"/><polygon fill="#0000ef" points="451.1,334.2 444.5,330.4 446.9,329.3 453.5,333.9"/><polygon fill="#ffcf00" points="280.7,336.3 274.1,335.8 276.5,347.3 283.1,347.2"/><polygon fill="#ff7000" points="227.4,319.8 220.9,326.0 223.3,333.5 229.8,328.0"/><polygon fill="#ff5000" points="249.6,316.9 243.0,319.6 245.4,329.7 252.0,327.2"/><polygon fill="#ff7000" points="265.1,324.8 258.5,325.6 260.9,336.8 267.5,336.0"/><polygon fill="#8fff70" points="305.2,357.9 298.6,358.0 301.0,367.9 307.6,366.7"/><polygon fill="#0000ef" points="475.6,353.7 469.0,346.8 471.4,348.9 478.0,356.4"/><polygon fill="#70ff8f" points="320.7,364.3 314.2,365.5 316.5,373.0 323.1,370.4"/><polygon fill="#ff8f00" points="220.9,326.0 214.3,333.0 216.7,339.8 223.3,333.5"/><polygon fill="#efff10" points="289.6,347.6 283.1,347.2 285.4,358.6 292.0,358.2"/><polygon fill="#ffaf00" points="214.3,333.0 207.7,340.6 210.1,346.6 216.7,339.8"/><polygon fill="#ffcf00" points="274.1,335.8 267.5,336.0 269.9,347.8 276.5,347.3"/><polygon fill="#ff5000" points="243.0,319.6 236.4,323.4 238.8,333.0 245.4,329.7"/><polygon fill="#ffef00" points="207.7,340.6 201.1,348.8 203.5,354.0 210.1,346.6"/><polygon fill="#0000ef" points="460.1,339.2 453.5,333.9 455.9,334.2 462.5,340.2"/><polygon fill="#afff50" points="484.6,364.1 478.0,356.4 480.4,359.3 487.0,367.4"/><polygon fill="#ff7000" points="258.5,325.6 252.0,327.2 254.3,338.4 260.9,336.8"/><polygon fill="#0000ef" points="444.5,330.4 437.9,327.2 440.3,325.5 446.9,329.3"/><polygon fill="#8fff70" points="298.6,358.0 292.0,358.2 294.4,369.0 301.0,367.9"/><polygon fill="#cfff30" points="201.1,348.8 194.5,357.4 196.9,361.6 203.5,354.0"/><polygon fill="#70ff8f" points="314.2,365.5 307.6,366.7 310.0,375.4 316.5,373.0"/><polygon fill="#8fff70" points="194.5,357.4 188.0,366.2 190.4,369.4 196.9,361.6"/><polygon fill="#efff10" points="283.1,347.2 276.5,347.3 278.9,359.2 285.4,358.6"/><polygon fill="#ff7000" points="236.4,323.4 229.8,328.0 232.2,337.0 238.8,333.0"/><polygon fill="#ffcf00" points="267.5,336.0 260.9,336.8 263.3,348.8 269.9,347.8"/><polygon fill="#ff8f00" points="252.0,327.2 245.4,329.7 247.8,340.5 254.3,338.4"/><polygon fill="#ff8f00" points="229.8,328.0 223.3,333.5 225.6,341.8 232.2,337.0"/><polygon fill="#0000ef" points="469.0,346.8 462.5,340.2 464.9,341.8 471.4,348.9"/><polygon fill="#70ff8f" points="307.6,366.7 301.0,367.9 303.4,377.7 310.0,375.4"/><polygon fill="#afff50" points="292.0,358.2 285.4,358.6 287.8,370.2 294.4,369.0"/><polygon fill="#efff10" points="276.5,347.3 269.9,347.8 272.3,360.1 278.9,359.2"/><polygon fill="#ffaf00" points="223.3,333.5 216.7,339.8 219.1,347.2 225.6,341.8"/><polygon fill="#50ffaf" points="323.1,370.4 316.5,373.0 318.9,380.4 325.5,376.5"/><polygon fill="#0000ef" points="453.5,333.9 446.9,329.3 449.3,329.0 455.9,334.2"/><polygon fill="#ff8f00" points="245.4,329.7 238.8,333.0 241.2,343.4 247.8,340.5"/><polygon fill="#ffcf00" points="260.9,336.8 254.3,338.4 256.7,350.2 263.3,348.8"/><polygon fill="#0000ef" points="478.0,356.4 471.4,348.9 473.8,351.4 480.4,359.3"/><polygon fill="#ffcf00" points="216.7,339.8 210.1,346.6 212.5,353.1 219.1,347.2"/><polygon fill="#70ff8f" points="301.0,367.9 294.4,369.0 296.8,379.9 303.4,377.7"/><polygon fill="#afff50" points="285.4,358.6 278.9,359.2 281.3,371.4 287.8,370.2"/><polygon fill="#50ffaf" points="316.5,373.0 310.0,375.4 312.4,384.0 318.9,380.4"/><polygon fill="#efff10" points="210.1,346.6 203.5,354.0 205.9,359.4 212.5,353.1"/><polygon fill="#ffaf00" points="238.8,333.0 232.2,337.0 234.6,346.8 241.2,343.4"/><polygon fill="#efff10" points="269.9,347.8 263.3,348.8 265.7,361.2 272.3,360.1"/><polygon fill="#afff50" points="487.0,367.4 480.4,359.3 482.8,362.4 489.4,370.6"/><polygon fill="#ffcf00" points="254.3,338.4 247.8,340.5 250.2,352.0 256.7,350.2"/><polygon fill="#cfff30" points="203.5,354.0 196.9,361.6 199.3,366.0 205.9,359.4"/><polygon fill="#0000ef" points="462.5,340.2 455.9,334.2 458.3,335.3 464.9,341.8"/><polygon fill="#50ffaf" points="294.4,369.0 287.8,370.2 290.2,381.8 296.8,379.9"/><polygon fill="#8fff70" points="196.9,361.6 190.4,369.4 192.8,372.7 199.3,366.0"/><polygon fill="#ffaf00" points="232.2,337.0 225.6,341.8 228.0,350.7 234.6,346.8"/><polygon fill="#30ffcf" points="310.0,375.4 303.4,377.7 305.8,387.4 312.4,384.0"/><polygon fill="#afff50" points="278.9,359.2 272.3,360.1 274.7,372.6 281.3,371.4"/><polygon fill="#0000ef" points="446.9,329.3 440.3,325.5 442.7,324.8 449.3,329.0"/><polygon fill="#efff10" points="263.3,348.8 256.7,350.2 259.1,362.5 265.7,361.2"/><polygon fill="#ffcf00" points="247.8,340.5 241.2,343.4 243.6,354.3 250.2,352.0"/><polygon fill="#ffcf00" points="225.6,341.8 219.1,347.2 221.5,355.2 228.0,350.7"/><polygon fill="#0000ef" points="471.4,348.9 464.9,341.8 467.2,344.0 473.8,351.4"/><polygon fill="#30ffcf" points="325.5,376.5 318.9,380.4 321.3,387.6 327.9,382.4"/><polygon fill="#50ffaf" points="287.8,370.2 281.3,371.4 283.7,383.6 290.2,381.8"/><polygon fill="#30ffcf" points="303.4,377.7 296.8,379.9 299.2,390.5 305.8,387.4"/><polygon fill="#afff50" points="272.3,360.1 265.7,361.2 268.1,373.8 274.7,372.6"/><polygon fill="#ffef00" points="219.1,347.2 212.5,353.1 214.9,360.0 221.5,355.2"/><polygon fill="#ffcf00" points="241.2,343.4 234.6,346.8 237.0,357.0 243.6,354.3"/><polygon fill="#efff10" points="256.7,350.2 250.2,352.0 252.6,364.0 259.1,362.5"/><polygon fill="#10ffef" points="318.9,380.4 312.4,384.0 314.8,392.4 321.3,387.6"/><polygon fill="#0000ef" points="455.9,334.2 449.3,329.0 451.7,329.7 458.3,335.3"/><polygon fill="#efff10" points="480.4,359.3 473.8,351.4 476.2,354.4 482.8,362.4"/><polygon fill="#efff10" points="212.5,353.1 205.9,359.4 208.3,365.1 214.9,360.0"/><polygon fill="#0000ef" points="440.3,325.5 433.8,322.7 436.1,321.6 442.7,324.8"/><polygon fill="#10ffef" points="296.8,379.9 290.2,381.8 292.6,393.2 299.2,390.5"/><polygon fill="#50ffaf" points="281.3,371.4 274.7,372.6 277.1,385.1 283.7,383.6"/><polygon fill="#ffef00" points="234.6,346.8 228.0,350.7 230.4,360.1 237.0,357.0"/><polygon fill="#afff50" points="265.7,361.2 259.1,362.5 261.5,375.0 268.1,373.8"/><polygon fill="#10ffef" points="312.4,384.0 305.8,387.4 308.2,396.8 314.8,392.4"/><polygon fill="#afff50" points="205.9,359.4 199.3,366.0 201.7,370.5 208.3,365.1"/><polygon fill="#efff10" points="250.2,352.0 243.6,354.3 246.0,365.7 252.6,364.0"/><polygon fill="#8fff70" points="199.3,366.0 192.8,372.7 195.2,375.9 201.7,370.5"/><polygon fill="#10ffef" points="290.2,381.8 283.7,383.6 286.1,395.5 292.6,393.2"/><polygon fill="#0000ef" points="464.9,341.8 458.3,335.3 460.7,337.3 467.2,344.0"/><polygon fill="#efff10" points="228.0,350.7 221.5,355.2 223.9,363.5 230.4,360.1"/><polygon fill="#50ffaf" points="274.7,372.6 268.1,373.8 270.5,386.4 277.1,385.1"/><polygon fill="#00efff" points="305.8,387.4 299.2,390.5 301.6,400.8 308.2,396.8"/><polygon fill="#afff50" points="259.1,362.5 252.6,364.0 255.0,376.1 261.5,375.0"/><polygon fill="#efff10" points="243.6,354.3 237.0,357.0 239.4,367.7 246.0,365.7"/><polygon fill="#0000ef" points="449.3,329.0 442.7,324.8 445.1,325.1 451.7,329.7"/><polygon fill="#efff10" points="221.5,355.2 214.9,360.0 217.3,367.2 223.9,363.5"/><polygon fill="#10ffef" points="283.7,383.6 277.1,385.1 279.5,397.4 286.1,395.5"/><polygon fill="#00cfff" points="299.2,390.5 292.6,393.2 295.0,404.2 301.6,400.8"/><polygon fill="#ffcf00" points="473.8,351.4 467.2,344.0 469.6,346.9 476.2,354.4"/><polygon fill="#00efff" points="321.3,387.6 314.8,392.4 317.1,400.3 323.7,394.4"/><polygon fill="#50ffaf" points="268.1,373.8 261.5,375.0 263.9,387.5 270.5,386.4"/><polygon fill="#cfff30" points="237.0,357.0 230.4,360.1 232.8,369.8 239.4,367.7"/><polygon fill="#afff50" points="252.6,364.0 246.0,365.7 248.4,377.3 255.0,376.1"/><polygon fill="#cfff30" points="214.9,360.0 208.3,365.1 210.7,371.0 217.3,367.2"/><polygon fill="#00cfff" points="314.8,392.4 308.2,396.8 310.6,405.7 317.1,400.3"/><polygon fill="#00cfff" points="292.6,393.2 286.1,395.5 288.4,407.0 295.0,404.2"/><polygon fill="#10ffef" points="277.1,385.1 270.5,386.4 272.9,398.8 279.5,397.4"/><polygon fill="#0000ef" points="458.3,335.3 451.7,329.7 454.1,331.4 460.7,337.3"/><polygon fill="#afff50" points="208.3,365.1 201.7,370.5 204.1,375.0 210.7,371.0"/><polygon fill="#50ffaf" points="261.5,375.0 255.0,376.1 257.3,388.3 263.9,387.5"/><polygon fill="#cfff30" points="230.4,360.1 223.9,363.5 226.2,372.1 232.8,369.8"/><polygon fill="#0000ef" points="442.7,324.8 436.1,321.6 438.5,321.6 445.1,325.1"/><polygon fill="#00afff" points="308.2,396.8 301.6,400.8 304.0,410.5 310.6,405.7"/><polygon fill="#afff50" points="246.0,365.7 239.4,367.7 241.8,378.5 248.4,377.3"/><polygon fill="#8fff70" points="201.7,370.5 195.2,375.9 197.5,379.1 204.1,375.0"/><polygon fill="#00cfff" points="286.1,395.5 279.5,397.4 281.9,409.2 288.4,407.0"/><polygon fill="#10ffef" points="270.5,386.4 263.9,387.5 266.3,399.7 272.9,398.8"/><polygon fill="#00afff" points="301.6,400.8 295.0,404.2 297.4,414.6 304.0,410.5"/><polygon fill="#ff7000" points="467.2,344.0 460.7,337.3 463.1,340.1 469.6,346.9"/><polygon fill="#afff50" points="223.9,363.5 217.3,367.2 219.7,374.6 226.2,372.1"/><polygon fill="#50ffaf" points="255.0,376.1 248.4,377.3 250.8,388.9 257.3,388.3"/><polygon fill="#8fff70" points="239.4,367.7 232.8,369.8 235.2,379.7 241.8,378.5"/><polygon fill="#00cfff" points="323.7,394.4 317.1,400.3 319.5,407.8 326.1,400.9"/><polygon fill="#00cfff" points="279.5,397.4 272.9,398.8 275.3,410.7 281.9,409.2"/><polygon fill="#0000ef" points="451.7,329.7 445.1,325.1 447.5,326.5 454.1,331.4"/><polygon fill="#008fff" points="295.0,404.2 288.4,407.0 290.8,417.9 297.4,414.6"/><polygon fill="#afff50" points="217.3,367.2 210.7,371.0 213.1,377.1 219.7,374.6"/><polygon fill="#00afff" points="317.1,400.3 310.6,405.7 313.0,414.0 319.5,407.8"/><polygon fill="#10ffef" points="263.9,387.5 257.3,388.3 259.7,400.2 266.3,399.7"/><polygon fill="#50ffaf" points="248.4,377.3 241.8,378.5 244.2,389.3 250.8,388.9"/><polygon fill="#8fff70" points="232.8,369.8 226.2,372.1 228.6,380.9 235.2,379.7"/><polygon fill="#008fff" points="310.6,405.7 304.0,410.5 306.4,419.5 313.0,414.0"/><polygon fill="#008fff" points="288.4,407.0 281.9,409.2 284.3,420.3 290.8,417.9"/><polygon fill="#8fff70" points="210.7,371.0 204.1,375.0 206.5,379.7 213.1,377.1"/><polygon fill="#00cfff" points="272.9,398.8 266.3,399.7 268.7,411.5 275.3,410.7"/><polygon fill="#ff5000" points="460.7,337.3 454.1,331.4 456.5,334.1 463.1,340.1"/><polygon fill="#0070ff" points="304.0,410.5 297.4,414.6 299.8,424.2 306.4,419.5"/><polygon fill="#10ffef" points="257.3,388.3 250.8,388.9 253.2,400.3 259.7,400.2"/><polygon fill="#8fff70" points="226.2,372.1 219.7,374.6 222.1,382.0 228.6,380.9"/><polygon fill="#ef0000" points="445.1,325.1 438.5,321.6 440.9,322.9 447.5,326.5"/><polygon fill="#70ff8f" points="241.8,378.5 235.2,379.7 237.6,389.5 244.2,389.3"/><polygon fill="#8fff70" points="204.1,375.0 197.5,379.1 199.9,382.4 206.5,379.7"/><polygon fill="#0070ff" points="281.9,409.2 275.3,410.7 277.7,422.0 284.3,420.3"/><polygon fill="#0050ff" points="297.4,414.6 290.8,417.9 293.2,427.9 299.8,424.2"/><polygon fill="#00cfff" points="266.3,399.7 259.7,400.2 262.1,411.7 268.7,411.5"/><polygon fill="#00afff" points="326.1,400.9 319.5,407.8 321.9,414.6 328.5,406.9"/><polygon fill="#10ffef" points="250.8,388.9 244.2,389.3 246.6,400.0 253.2,400.3"/><polygon fill="#008fff" points="319.5,407.8 313.0,414.0 315.4,421.6 321.9,414.6"/><polygon fill="#8fff70" points="219.7,374.6 213.1,377.1 215.5,383.2 222.1,382.0"/><polygon fill="#70ff8f" points="235.2,379.7 228.6,380.9 231.0,389.6 237.6,389.5"/><polygon fill="#0070ff" points="275.3,410.7 268.7,411.5 271.1,422.7 277.7,422.0"/><polygon fill="#0050ff" points="290.8,417.9 284.3,420.3 286.7,430.6 293.2,427.9"/><polygon fill="#0070ff" points="313.0,414.0 306.4,419.5 308.8,427.7 315.4,421.6"/><polygon fill="#ff1000" points="454.1,331.4 447.5,326.5 449.9,329.2 456.5,334.1"/><polygon fill="#00cfff" points="259.7,400.2 253.2,400.3 255.6,411.3 262.1,411.7"/><polygon fill="#0050ff" points="306.4,419.5 299.8,424.2 302.2,432.9 308.8,427.7"/><polygon fill="#8fff70" points="213.1,377.1 206.5,379.7 208.9,384.4 215.5,383.2"/><polygon fill="#30ffcf" points="244.2,389.3 237.6,389.5 240.0,399.3 246.6,400.0"/><polygon fill="#0050ff" points="284.3,420.3 277.7,422.0 280.1,432.3 286.7,430.6"/><polygon fill="#70ff8f" points="228.6,380.9 222.1,382.0 224.5,389.5 231.0,389.6"/><polygon fill="#008fff" points="268.7,411.5 262.1,411.7 264.5,422.6 271.1,422.7"/><polygon fill="#0030ff" points="299.8,424.2 293.2,427.9 295.6,437.0 302.2,432.9"/><polygon fill="#00cfff" points="253.2,400.3 246.6,400.0 249.0,410.2 255.6,411.3"/><polygon fill="#8fff70" points="206.5,379.7 199.9,382.4 202.3,385.6 208.9,384.4"/><polygon fill="#cf0000" points="447.5,326.5 440.9,322.9 443.3,325.4 449.9,329.2"/><polygon fill="#0050ff" points="277.7,422.0 271.1,422.7 273.5,433.0 280.1,432.3"/><polygon fill="#30ffcf" points="237.6,389.5 231.0,389.6 233.4,398.2 240.0,399.3"/><polygon fill="#0010ff" points="293.2,427.9 286.7,430.6 289.0,439.9 295.6,437.0"/><polygon fill="#0070ff" points="321.9,414.6 315.4,421.6 317.8,428.3 324.3,420.7"/><polygon fill="#70ff8f" points="222.1,382.0 215.5,383.2 217.9,389.4 224.5,389.5"/><polygon fill="#008fff" points="262.1,411.7 255.6,411.3 257.9,421.7 264.5,422.6"/><polygon fill="#0050ff" points="315.4,421.6 308.8,427.7 311.2,434.9 317.8,428.3"/><polygon fill="#00efff" points="246.6,400.0 240.0,399.3 242.4,408.6 249.0,410.2"/><polygon fill="#0010ff" points="308.8,427.7 302.2,432.9 304.6,440.5 311.2,434.9"/><polygon fill="#0010ff" points="286.7,430.6 280.1,432.3 282.5,441.7 289.0,439.9"/><polygon fill="#0050ff" points="271.1,422.7 264.5,422.6 266.9,432.6 273.5,433.0"/><polygon fill="#70ff8f" points="215.5,383.2 208.9,384.4 211.3,389.1 217.9,389.4"/><polygon fill="#50ffaf" points="231.0,389.6 224.5,389.5 226.9,396.9 233.4,398.2"/><polygon fill="#af0000" points="440.9,322.9 434.4,320.5 436.8,323.0 443.3,325.4"/><polygon fill="#0000ef" points="302.2,432.9 295.6,437.0 298.0,444.9 304.6,440.5"/><polygon fill="#00afff" points="255.6,411.3 249.0,410.2 251.4,419.9 257.9,421.7"/><polygon fill="#0010ff" points="280.1,432.3 273.5,433.0 275.9,442.3 282.5,441.7"/><polygon fill="#10ffef" points="240.0,399.3 233.4,398.2 235.8,406.6 242.4,408.6"/><polygon fill="#0000ef" points="295.6,437.0 289.0,439.9 291.4,448.0 298.0,444.9"/><polygon fill="#0050ff" points="264.5,422.6 257.9,421.7 260.3,431.3 266.9,432.6"/><polygon fill="#70ff8f" points="208.9,384.4 202.3,385.6 204.7,388.8 211.3,389.1"/><polygon fill="#50ffaf" points="224.5,389.5 217.9,389.4 220.3,395.4 226.9,396.9"/><polygon fill="#0050ff" points="324.3,420.7 317.8,428.3 320.1,434.0 326.7,426.1"/><polygon fill="#0030ff" points="317.8,428.3 311.2,434.9 313.6,441.0 320.1,434.0"/><polygon fill="#00afff" points="249.0,410.2 242.4,408.6 244.8,417.5 251.4,419.9"/><polygon fill="#0010ff" points="273.5,433.0 266.9,432.6 269.3,441.7 275.9,442.3"/><polygon fill="#0000cf" points="289.0,439.9 282.5,441.7 284.9,449.8 291.4,448.0"/><polygon fill="#0000ef" points="311.2,434.9 304.6,440.5 307.0,446.9 313.6,441.0"/><polygon fill="#10ffef" points="233.4,398.2 226.9,396.9 229.2,404.1 235.8,406.6"/><polygon fill="#0070ff" points="257.9,421.7 251.4,419.9 253.8,429.0 260.3,431.3"/><polygon fill="#70ff8f" points="217.9,389.4 211.3,389.1 213.7,393.8 220.3,395.4"/><polygon fill="#0000cf" points="304.6,440.5 298.0,444.9 300.4,451.5 307.0,446.9"/><polygon fill="#0000cf" points="282.5,441.7 275.9,442.3 278.3,450.4 284.9,449.8"/><polygon fill="#00cfff" points="242.4,408.6 235.8,406.6 238.2,414.5 244.8,417.5"/><polygon fill="#0030ff" points="266.9,432.6 260.3,431.3 262.7,439.9 269.3,441.7"/><polygon fill="#0000cf" points="298.0,444.9 291.4,448.0 293.8,454.8 300.4,451.5"/><polygon fill="#30ffcf" points="226.9,396.9 220.3,395.4 222.7,401.3 229.2,404.1"/><polygon fill="#70ff8f" points="211.3,389.1 204.7,388.8 207.1,392.0 213.7,393.8"/><polygon fill="#008fff" points="251.4,419.9 244.8,417.5 247.2,425.8 253.8,429.0"/><polygon fill="#0000ef" points="275.9,442.3 269.3,441.7 271.7,449.6 278.3,450.4"/><polygon fill="#0010ff" points="320.1,434.0 313.6,441.0 316.0,446.1 322.5,438.8"/><polygon fill="#0000af" points="291.4,448.0 284.9,449.8 287.3,456.7 293.8,454.8"/><polygon fill="#0050ff" points="260.3,431.3 253.8,429.0 256.2,437.1 262.7,439.9"/><polygon fill="#0000ef" points="313.6,441.0 307.0,446.9 309.4,452.1 316.0,446.1"/><polygon fill="#00efff" points="235.8,406.6 229.2,404.1 231.6,411.0 238.2,414.5"/><polygon fill="#50ffaf" points="220.3,395.4 213.7,393.8 216.1,398.4 222.7,401.3"/><polygon fill="#0000cf" points="307.0,446.9 300.4,451.5 302.8,456.8 309.4,452.1"/><polygon fill="#0000af" points="284.9,449.8 278.3,450.4 280.7,457.2 287.3,456.7"/><polygon fill="#00afff" points="244.8,417.5 238.2,414.5 240.6,421.9 247.2,425.8"/><polygon fill="#0000ef" points="269.3,441.7 262.7,439.9 265.1,447.6 271.7,449.6"/><polygon fill="#0000af" points="300.4,451.5 293.8,454.8 296.2,460.2 302.8,456.8"/><polygon fill="#0070ff" points="253.8,429.0 247.2,425.8 249.6,433.4 256.2,437.1"/><polygon fill="#10ffef" points="229.2,404.1 222.7,401.3 225.1,407.0 231.6,411.0"/><polygon fill="#0000cf" points="278.3,450.4 271.7,449.6 274.1,456.2 280.7,457.2"/><polygon fill="#70ff8f" points="213.7,393.8 207.1,392.0 209.5,395.3 216.1,398.4"/><polygon fill="#0000af" points="293.8,454.8 287.3,456.7 289.6,462.1 296.2,460.2"/><polygon fill="#0010ff" points="262.7,439.9 256.2,437.1 258.6,444.4 265.1,447.6"/><polygon fill="#0010ff" points="322.5,438.8 316.0,446.1 318.4,449.9 324.9,442.6"/><polygon fill="#00cfff" points="238.2,414.5 231.6,411.0 234.0,417.5 240.6,421.9"/><polygon fill="#0000cf" points="316.0,446.1 309.4,452.1 311.8,456.0 318.4,449.9"/><polygon fill="#008fff" points="247.2,425.8 240.6,421.9 243.0,428.8 249.6,433.4"/><polygon fill="#50ffaf" points="222.7,401.3 216.1,398.4 218.5,402.8 225.1,407.0"/><polygon fill="#0000af" points="287.3,456.7 280.7,457.2 283.1,462.6 289.6,462.1"/><polygon fill="#0000cf" points="271.7,449.6 265.1,447.6 267.5,454.0 274.1,456.2"/><polygon fill="#0000af" points="309.4,452.1 302.8,456.8 305.2,460.8 311.8,456.0"/><polygon fill="#0050ff" points="256.2,437.1 249.6,433.4 252.0,440.1 258.6,444.4"/><polygon fill="#0000af" points="302.8,456.8 296.2,460.2 298.6,464.1 305.2,460.8"/><polygon fill="#10ffef" points="231.6,411.0 225.1,407.0 227.5,412.5 234.0,417.5"/><polygon fill="#0000af" points="280.7,457.2 274.1,456.2 276.5,461.6 283.1,462.6"/><polygon fill="#0000ef" points="265.1,447.6 258.6,444.4 260.9,450.5 267.5,454.0"/><polygon fill="#70ff8f" points="216.1,398.4 209.5,395.3 211.9,398.5 218.5,402.8"/><polygon fill="#00008f" points="296.2,460.2 289.6,462.1 292.0,466.1 298.6,464.1"/><polygon fill="#00afff" points="240.6,421.9 234.0,417.5 236.4,423.5 243.0,428.8"/><polygon fill="#0070ff" points="249.6,433.4 243.0,428.8 245.4,434.9 252.0,440.1"/><polygon fill="#0000cf" points="274.1,456.2 267.5,454.0 269.9,459.2 276.5,461.6"/><polygon fill="#30ffcf" points="225.1,407.0 218.5,402.8 220.9,407.2 227.5,412.5"/><polygon fill="#00008f" points="289.6,462.1 283.1,462.6 285.5,466.5 292.0,466.1"/><polygon fill="#0030ff" points="258.6,444.4 252.0,440.1 254.4,445.9 260.9,450.5"/><polygon fill="#00efff" points="234.0,417.5 227.5,412.5 229.8,417.6 236.4,423.5"/><polygon fill="#0000af" points="283.1,462.6 276.5,461.6 278.9,465.5 285.5,466.5"/><polygon fill="#0000ef" points="267.5,454.0 260.9,450.5 263.3,455.5 269.9,459.2"/><polygon fill="#00afff" points="243.0,428.8 236.4,423.5 238.8,428.9 245.4,434.9"/><polygon fill="#70ff8f" points="218.5,402.8 211.9,398.5 214.3,401.7 220.9,407.2"/><polygon fill="#0050ff" points="252.0,440.1 245.4,434.9 247.8,440.2 254.4,445.9"/><polygon fill="#0000af" points="276.5,461.6 269.9,459.2 272.3,463.1 278.9,465.5"/><polygon fill="#30ffcf" points="227.5,412.5 220.9,407.2 223.3,411.4 229.8,417.6"/><polygon fill="#0010ff" points="260.9,450.5 254.4,445.9 256.8,450.7 263.3,455.5"/><polygon fill="#00cfff" points="236.4,423.5 229.8,417.6 232.2,422.4 238.8,428.9"/><polygon fill="#008fff" points="245.4,434.9 238.8,428.9 241.2,433.8 247.8,440.2"/><polygon fill="#0000cf" points="269.9,459.2 263.3,455.5 265.7,459.3 272.3,463.1"/><polygon fill="#70ff8f" points="220.9,407.2 214.3,401.7 216.7,405.0 223.3,411.4"/><polygon fill="#0050ff" points="254.4,445.9 247.8,440.2 250.2,444.8 256.8,450.7"/><polygon fill="#10ffef" points="229.8,417.6 223.3,411.4 225.7,415.4 232.2,422.4"/><polygon fill="#0010ff" points="263.3,455.5 256.8,450.7 259.2,454.4 265.7,459.3"/><polygon fill="#00cfff" points="238.8,428.9 232.2,422.4 234.6,426.7 241.2,433.8"/><polygon fill="#008fff" points="247.8,440.2 241.2,433.8 243.6,438.0 250.2,444.8"/><polygon fill="#50ffaf" points="223.3,411.4 216.7,405.0 219.1,408.2 225.7,415.4"/><polygon fill="#0050ff" points="256.8,450.7 250.2,444.8 252.6,448.4 259.2,454.4"/><polygon fill="#10ffef" points="232.2,422.4 225.7,415.4 228.1,419.2 234.6,426.7"/><polygon fill="#00cfff" points="241.2,433.8 234.6,426.7 237.0,430.6 243.6,438.0"/><polygon fill="#0070ff" points="250.2,444.8 243.6,438.0 246.0,441.6 252.6,448.4"/><polygon fill="#50ffaf" points="225.7,415.4 219.1,408.2 221.5,411.4 228.1,419.2"/><polygon fill="#10ffef" points="234.6,426.7 228.1,419.2 230.5,422.7 237.0,430.6"/><polygon fill="#00cfff" points="243.6,438.0 237.0,430.6 239.4,434.1 246.0,441.6"/><polygon fill="#50ffaf" points="228.1,419.2 221.5,411.4 223.9,414.7 230.5,422.7"/><polygon fill="#10ffef" points="237.0,430.6 230.5,422.7 232.8,426.1 239.4,434.1"/><polygon fill="#50ffaf" points="230.5,422.7 223.9,414.7 226.3,417.9 232.8,426.1"/></g>
<g stroke="#000" stroke-width="1" shape-rendering="crispEdges"><line x1="81.5" y1="217.5" x2="203.4" y2="382.0" /><line x1="203.4" y1="382.0" x2="538.4" y2="321.8" /><line x1="203.4" y1="382.0" x2="203.4" y2="502.0" /><line x1="81.5" y1="337.5" x2="203.4" y2="502.0" /><line x1="203.4" y1="502.0" x2="538.4" y2="441.8" /><line x1="538.4" y1="441.8" x2="538.4" y2="321.8" /><line x1="81.5" y1="338.1" x2="76.0" y2="338.5" /><line x1="89.1" y1="347.8" x2="85.6" y2="348.2" /><line x1="96.7" y1="358.7" x2="91.2" y2="359.1" /><line x1="104.4" y1="368.3" x2="100.9" y2="368.7" /><line x1="112.0" y1="379.2" x2="106.5" y2="379.6" /><line x1="119.6" y1="388.9" x2="116.1" y2="389.3" /><line x1="127.2" y1="399.8" x2="121.7" y2="400.2" /><line x1="134.8" y1="409.5" x2="131.3" y2="409.9" /><line x1="142.4" y1="420.4" x2="136.9" y2="420.8" /><line x1="150.1" y1="430.0" x2="146.6" y2="430.4" /><line x1="157.7" y1="440.9" x2="152.2" y2="441.3" /><line x1="165.3" y1="450.6" x2="161.8" y2="451.0" /><line x1="172.9" y1="461.5" x2="167.4" y2="461.9" /><line x1="180.5" y1="471.2" x2="177.0" y2="471.6" /><line x1="188.2" y1="482.0" x2="182.7" y2="482.4" /><line x1="195.8" y1="491.7" x2="192.3" y2="492.1" /><line x1="203.4" y1="502.6" x2="197.9" y2="503.0" /><line x1="538.4" y1="441.8" x2="541.8" y2="446.4" /><line x1="517.5" y1="445.6" x2="519.5" y2="448.4" /><line x1="496.5" y1="449.3" x2="499.9" y2="453.9" /><line x1="475.6" y1="453.1" x2="477.7" y2="455.9" /><line x1="454.6" y1="456.8" x2="458.0" y2="461.4" /><line x1="433.7" y1="460.6" x2="435.8" y2="463.4" /><line x1="412.8" y1="464.4" x2="416.2" y2="469.0" /><line x1="391.8" y1="468.1" x2="393.9" y2="470.9" /><line x1="370.9" y1="471.9" x2="374.3" y2="476.5" /><line x1="350.0" y1="475.7" x2="352.0" y2="478.5" /><line x1="329.0" y1="479.4" x2="332.4" y2="484.0" /><line x1="308.1" y1="483.2" x2="310.2" y2="486.0" /><line x1="287.1" y1="486.9" x2="290.5" y2="491.5" /><line x1="266.2" y1="490.7" x2="268.3" y2="493.5" /><line x1="245.3" y1="494.5" x2="248.7" y2="499.1" /><line x1="224.3" y1="498.2" x2="226.4" y2="501.0" /><line x1="203.4" y1="502.0" x2="206.8" y2="506.6" /><line x1="538.4" y1="441.8" x2="545.4" y2="441.8" /><line x1="538.4" y1="411.8" x2="545.4" y2="411.8" /><line x1="538.4" y1="381.8" x2="545.4" y2="381.8" /><line x1="538.4" y1="351.8" x2="545.4" y2="351.8" /><line x1="538.4" y1="321.8" x2="545.4" y2="321.8" /></g>
<g font-size="10" letter-spacing="0.4" fill="#000"><text x="72.6" y="343.5" text-anchor="end">-4</text><text x="87.8" y="364.1" text-anchor="end">-3</text><text x="103.1" y="384.6" text-anchor="end">-2</text><text x="118.3" y="405.2" text-anchor="end">-1</text><text x="133.5" y="425.8" text-anchor="end">0</text><text x="148.8" y="446.3" text-anchor="end">1</text><text x="164.0" y="466.9" text-anchor="end">2</text><text x="179.3" y="487.4" text-anchor="end">3</text><text x="194.5" y="508.0" text-anchor="end">4</text><text x="547.2" y="458.1" text-anchor="middle">-4</text><text x="505.4" y="465.7" text-anchor="middle">-3</text><text x="463.5" y="473.2" text-anchor="middle">-2</text><text x="421.6" y="480.7" text-anchor="middle">-1</text><text x="379.7" y="488.2" text-anchor="middle">0</text><text x="337.9" y="495.8" text-anchor="middle">1</text><text x="296.0" y="503.3" text-anchor="middle">2</text><text x="254.1" y="510.8" text-anchor="middle">3</text><text x="212.2" y="518.3" text-anchor="middle">4</text><text x="548.4" y="444.6">-1</text><text x="548.4" y="414.6">-0.5</text><text x="548.4" y="384.6">0</text><text x="548.4" y="354.6">0.5</text><text x="548.4" y="324.6">1</text><text x="113" y="428" text-anchor="middle">Y</text><text x="572.8" y="380">Z</text></g>
</svg>
<div class="abs" id="ctx">
<div class="i" style="top:2px"><span>Copy</span></div>
<div class="i" style="top:21px"><span style="letter-spacing:0.15px">Cut</span></div>
<div class="i d" style="top:40px"><span>Paste</span></div>
<div class="i" style="top:59px"><span style="letter-spacing:-0.10px">Copy Style</span></div>
<div class="i d" style="top:78px"><span style="letter-spacing:-0.10px">Paste Style</span></div>
<div class="s" style="top:100px"></div>
<div class="i h" style="top:106px"><span style="letter-spacing:-0.08px">Delete</span></div>
<div class="i" style="top:125px"><span>Clear</span></div>
<div class="i d" style="top:144px"><span>Undo</span></div>
<div class="i d" style="top:163px"><span>Redo</span></div>
<div class="s" style="top:185px"></div>
<div class="i" style="top:191px"><span>Hide</span></div>
<div class="i" style="top:210px"><span>Unhide all</span></div>
<div class="s" style="top:232px"></div>
<div class="i" style="top:238px"><span style="letter-spacing:-0.11px">Copy to Clipboard</span></div>
<div class="s" style="top:260px"></div>
<div class="i" style="top:266px"><span style="letter-spacing:-0.37px">Label</span></div>
<div class="a" style="top:271px"></div>
<div class="i d" style="top:285px"><span>Legend</span></div>
<div class="a" style="top:290px"></div>
<div class="i d" style="top:304px"><span style="letter-spacing:-0.04px">Edit curve data</span></div>
<div class="s" style="top:326px"></div>
<div class="i" style="top:332px"><span>Open Quick Editor</span></div>
</div>
<div class="abs" id="tip"><span>Delete selected object</span></div>
</body></html>
